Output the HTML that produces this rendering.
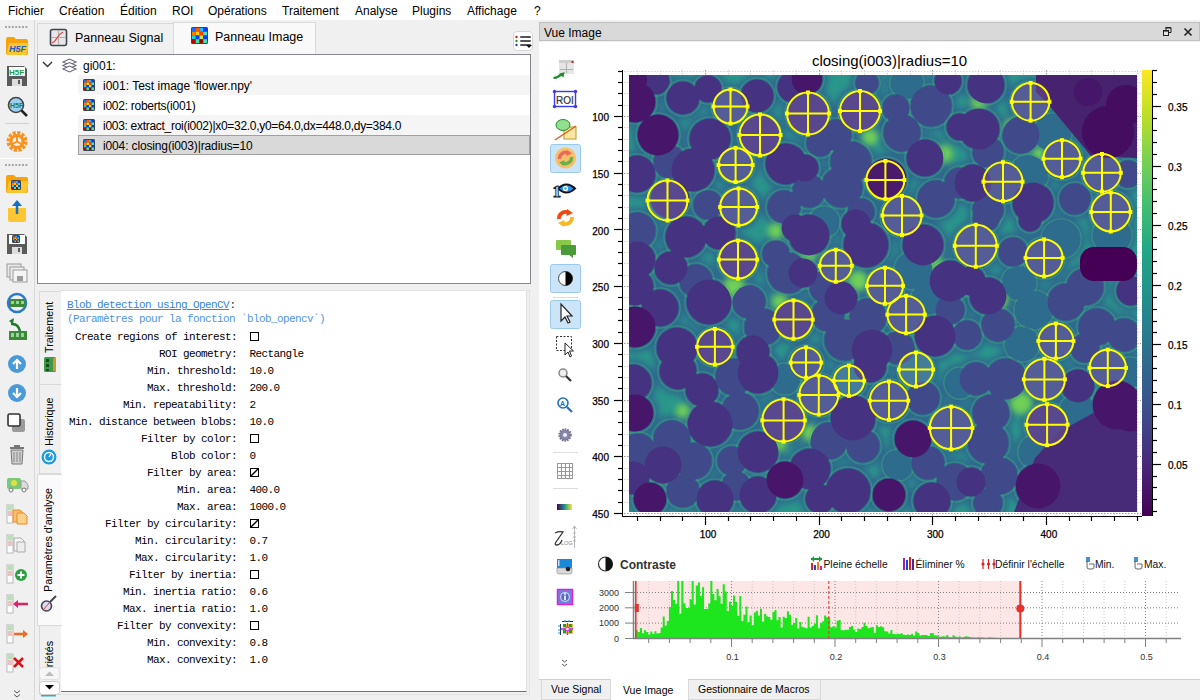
<!DOCTYPE html><html><head><meta charset="utf-8"><style>
*{margin:0;padding:0;box-sizing:border-box}
body{width:1200px;height:700px;overflow:hidden;background:#f0f0f0;position:relative;font-family:"Liberation Sans",sans-serif;color:#000}
.abs{position:absolute}
.t{position:absolute;white-space:nowrap;line-height:1}
.mono{font-family:"Liberation Mono",monospace;font-size:11px;letter-spacing:-0.6px}
.vt{position:absolute;white-space:nowrap;line-height:1;font-size:10.8px;transform-origin:0 0;transform:rotate(-90deg)}
</style></head><body>
<div class="abs" style="left:0;top:0;width:1200px;height:20px;background:#fff"></div>
<div class="t" style="left:8px;top:5px;font-size:12px">Fichier</div>
<div class="t" style="left:59px;top:5px;font-size:12px">Création</div>
<div class="t" style="left:120px;top:5px;font-size:12px">Édition</div>
<div class="t" style="left:172px;top:5px;font-size:12px">ROI</div>
<div class="t" style="left:208px;top:5px;font-size:12px">Opérations</div>
<div class="t" style="left:282px;top:5px;font-size:12px">Traitement</div>
<div class="t" style="left:355px;top:5px;font-size:12px">Analyse</div>
<div class="t" style="left:412px;top:5px;font-size:12px">Plugins</div>
<div class="t" style="left:467px;top:5px;font-size:12px">Affichage</div>
<div class="t" style="left:534px;top:5px;font-size:12px">?</div>
<div class="abs" style="left:34px;top:20px;width:1px;height:680px;background:#d8d8d8"></div>
<div class="abs" style="left:0;top:158px;width:34px;height:1px;background:#fff"></div>
<svg class="abs" style="left:0;top:0" width="1200" height="700"><rect x="5.0" y="26" width="2" height="2" fill="#a8a8a8"/><rect x="8.4" y="26" width="2" height="2" fill="#a8a8a8"/><rect x="11.8" y="26" width="2" height="2" fill="#a8a8a8"/><rect x="15.2" y="26" width="2" height="2" fill="#a8a8a8"/><rect x="18.6" y="26" width="2" height="2" fill="#a8a8a8"/><rect x="22.0" y="26" width="2" height="2" fill="#a8a8a8"/><rect x="25.4" y="26" width="2" height="2" fill="#a8a8a8"/><rect x="5.0" y="164" width="2" height="2" fill="#a8a8a8"/><rect x="8.4" y="164" width="2" height="2" fill="#a8a8a8"/><rect x="11.8" y="164" width="2" height="2" fill="#a8a8a8"/><rect x="15.2" y="164" width="2" height="2" fill="#a8a8a8"/><rect x="18.6" y="164" width="2" height="2" fill="#a8a8a8"/><rect x="22.0" y="164" width="2" height="2" fill="#a8a8a8"/><rect x="25.4" y="164" width="2" height="2" fill="#a8a8a8"/><rect x="5" y="123" width="24" height="1" fill="#d0d0d0"/><path d="M6,39 q0,-2 2,-2 h6 l2,2 h10 q2,0 2,2 v12 q0,2 -2,2 h-18 q-2,0 -2,-2z" fill="#f7a20a"/><path d="M9,43 h18 q2,0 1.5,2 l-1.5,8 q-0.5,2 -2.5,2 h-16 q-2,0 -1.5,-2 z" fill="#fcc632"/><text x="9" y="52" font-size="9" font-weight="bold" font-style="italic" fill="#1d5fd0" font-family="Liberation Sans">H5F</text><path d="M7,66 h17 l3,3 v17 h-20z" fill="#5a5a5a"/><rect x="9" y="67" width="16" height="9" fill="#fff"/><rect x="12" y="79" width="10" height="7" fill="#ddd"/><rect x="18" y="80" width="2" height="4" fill="#5a5a5a"/><text x="9" y="75" font-size="8" font-weight="bold" fill="#1aa040" font-family="Liberation Sans">H5F</text><circle cx="16" cy="105" r="7.5" fill="#9cd0f0" stroke="#444" stroke-width="1.6"/><path d="M21.5,110.5 L27,116" stroke="#222" stroke-width="2.5"/><text x="10" y="108" font-size="7" font-weight="bold" fill="#1a8040" font-family="Liberation Sans">H5F</text><circle cx="17" cy="141.5" r="8.5" fill="none" stroke="#f7931e" stroke-width="4" stroke-dasharray="3 1.45"/><circle cx="17" cy="141.5" r="6" fill="none" stroke="#f7931e" stroke-width="3"/><path d="M17,141.5 L17,136 M17,141.5 L12.5,144 M17,141.5 L21.5,144" stroke="#f7931e" stroke-width="2"/><path d="M6,177 q0,-2 2,-2 h6 l2,2 h10 q2,0 2,2 v12 q0,2 -2,2 h-18 q-2,0 -2,-2z" fill="#f7a20a"/><path d="M9,181 h18 q2,0 1.5,2 l-1.5,8 q-0.5,2 -2.5,2 h-16 q-2,0 -1.5,-2 z" fill="#fcc632"/><rect x="11" y="180" width="10" height="10" rx="1.5" fill="#3a4550"/><rect x="12.00" y="181.00" width="2.00" height="2.00" fill="#1f6fff"/><rect x="14.00" y="181.00" width="2.00" height="2.00" fill="#ff5a00"/><rect x="16.00" y="181.00" width="2.00" height="2.00" fill="#1fb7ff"/><rect x="18.00" y="181.00" width="2.00" height="2.00" fill="#0a3cff"/><rect x="12.00" y="183.00" width="2.00" height="2.00" fill="#ff7a00"/><rect x="14.00" y="183.00" width="2.00" height="2.00" fill="#ffcc00"/><rect x="16.00" y="183.00" width="2.00" height="2.00" fill="#ff3a00"/><rect x="18.00" y="183.00" width="2.00" height="2.00" fill="#3ce6c8"/><rect x="12.00" y="185.00" width="2.00" height="2.00" fill="#18d6d6"/><rect x="14.00" y="185.00" width="2.00" height="2.00" fill="#0a3cff"/><rect x="16.00" y="185.00" width="2.00" height="2.00" fill="#c8e632"/><rect x="18.00" y="185.00" width="2.00" height="2.00" fill="#0a3cff"/><rect x="12.00" y="187.00" width="2.00" height="2.00" fill="#c80000"/><rect x="14.00" y="187.00" width="2.00" height="2.00" fill="#3ce6a0"/><rect x="16.00" y="187.00" width="2.00" height="2.00" fill="#a00000"/><rect x="18.00" y="187.00" width="2.00" height="2.00" fill="#3ce6b4"/><path d="M8,208 h18 v12 q0,2 -2,2 h-14 q-2,0 -2,-2z" fill="#fcc632"/><path d="M17,202 v12" stroke="#1570c8" stroke-width="2.5"/><path d="M12,206 l5,-6 l5,6z" fill="#1570c8"/><path d="M7,234 h17 l3,3 v17 h-20z" fill="#5a5a5a"/><rect x="9" y="235" width="16" height="9" fill="#fff"/><rect x="12" y="247" width="10" height="7" fill="#ddd"/><rect x="18" y="248" width="2" height="4" fill="#5a5a5a"/><rect x="12" y="235" width="8" height="8" rx="1.5" fill="#3a4550"/><rect x="13.00" y="236.00" width="1.50" height="1.50" fill="#1f6fff"/><rect x="14.50" y="236.00" width="1.50" height="1.50" fill="#ff5a00"/><rect x="16.00" y="236.00" width="1.50" height="1.50" fill="#1fb7ff"/><rect x="17.50" y="236.00" width="1.50" height="1.50" fill="#0a3cff"/><rect x="13.00" y="237.50" width="1.50" height="1.50" fill="#ff7a00"/><rect x="14.50" y="237.50" width="1.50" height="1.50" fill="#ffcc00"/><rect x="16.00" y="237.50" width="1.50" height="1.50" fill="#ff3a00"/><rect x="17.50" y="237.50" width="1.50" height="1.50" fill="#3ce6c8"/><rect x="13.00" y="239.00" width="1.50" height="1.50" fill="#18d6d6"/><rect x="14.50" y="239.00" width="1.50" height="1.50" fill="#0a3cff"/><rect x="16.00" y="239.00" width="1.50" height="1.50" fill="#c8e632"/><rect x="17.50" y="239.00" width="1.50" height="1.50" fill="#0a3cff"/><rect x="13.00" y="240.50" width="1.50" height="1.50" fill="#c80000"/><rect x="14.50" y="240.50" width="1.50" height="1.50" fill="#3ce6a0"/><rect x="16.00" y="240.50" width="1.50" height="1.50" fill="#a00000"/><rect x="17.50" y="240.50" width="1.50" height="1.50" fill="#3ce6b4"/><rect x="7" y="264" width="14" height="13" fill="#e8e8e8" stroke="#9a9a9a"/><rect x="10" y="267" width="14" height="13" fill="#eee" stroke="#9a9a9a"/><rect x="13" y="270" width="14" height="12" fill="#f4f4f4" stroke="#9a9a9a"/><rect x="17" y="276" width="6" height="5" fill="#9a9a9a"/><circle cx="17" cy="303" r="9" fill="none" stroke="#2a78d0" stroke-width="2.5"/><rect x="9" y="299" width="16" height="8" fill="#3a8a3a"/><rect x="11" y="301" width="3" height="3" fill="#9ad09a"/><rect x="16" y="301" width="3" height="3" fill="#9ad09a"/><rect x="21" y="301" width="3" height="3" fill="#9ad09a"/><rect x="9" y="331" width="18" height="9" fill="#3a8a3a"/><rect x="11" y="333" width="3" height="4" fill="#9ad09a"/><rect x="16" y="333" width="3" height="4" fill="#9ad09a"/><rect x="21" y="333" width="3" height="4" fill="#9ad09a"/><path d="M20,331 q-2,-8 -9,-7" stroke="#1a7a2a" stroke-width="2.5" fill="none"/><path d="M9,321 l5,-3 l-1,6z" fill="#1a7a2a"/><circle cx="17" cy="364" r="9" fill="#4a9ad8"/><path d="M17,369 v-9 M13,364 l4,-4 l4,4" stroke="#fff" stroke-width="2.2" fill="none"/><circle cx="17" cy="393" r="9" fill="#4a9ad8"/><path d="M17,388 v9 M13,393 l4,4 l4,-4" stroke="#fff" stroke-width="2.2" fill="none"/><rect x="12" y="419" width="13" height="13" rx="2" fill="#9a9a9a"/><rect x="8" y="414" width="12" height="12" rx="1.5" fill="#fff" stroke="#333" stroke-width="1.6"/><rect x="10" y="447" width="14" height="2" fill="#777"/><rect x="14" y="445" width="6" height="2" fill="#777"/><path d="M11,450 h12 l-1,14 h-10z" fill="#cfcfcf" stroke="#777"/><path d="M14,452 v10 M17,452 v10 M20,452 v10" stroke="#888"/><rect x="7" y="478" width="14" height="11" rx="2" fill="#7ac87a"/><circle cx="14" cy="483" r="3" fill="#e0e040"/><path d="M21,481 h4 l3,4 v4 h-7z" fill="#ddd" stroke="#999"/><circle cx="11" cy="490" r="2" fill="#fff" stroke="#777"/><circle cx="24" cy="490" r="2" fill="#fff" stroke="#777"/><rect x="7" y="505" width="6" height="18" fill="#fff" stroke="#aaa" stroke-width="0.8"/><rect x="7.5" y="505.5" width="5" height="5" fill="#b8e0b8"/><rect x="7.5" y="511" width="5" height="5" fill="#f0c0c0"/><path d="M13,510 h7 l3,3 v9 h-10z" fill="#f8c070" stroke="#f08a20"/><path d="M17,513 h7 l3,3 v8 h-10z" fill="#fbd08a" stroke="#f08a20"/><rect x="7" y="535" width="6" height="18" fill="#fff" stroke="#aaa" stroke-width="0.8"/><rect x="7.5" y="535.5" width="5" height="5" fill="#b8e0b8"/><rect x="7.5" y="541" width="5" height="5" fill="#f0c0c0"/><path d="M14,538 h7 l3,3 v10 h-10z" fill="#f4f4f4" stroke="#aaa"/><path d="M17,542 h8 v10 h-8z" fill="#eee" stroke="#aaa"/><rect x="7" y="565" width="6" height="18" fill="#fff" stroke="#aaa" stroke-width="0.8"/><rect x="7.5" y="565.5" width="5" height="5" fill="#b8e0b8"/><rect x="7.5" y="571" width="5" height="5" fill="#f0c0c0"/><circle cx="21" cy="575" r="6" fill="#2aa040"/><path d="M21,571.5 v7 M17.5,575 h7" stroke="#fff" stroke-width="2"/><rect x="7" y="595" width="6" height="18" fill="#fff" stroke="#aaa" stroke-width="0.8"/><rect x="7.5" y="595.5" width="5" height="5" fill="#b8e0b8"/><rect x="7.5" y="601" width="5" height="5" fill="#f0c0c0"/><path d="M28,604 h-12" stroke="#e0206a" stroke-width="2.5"/><path d="M13,604 l5,-4 v8z" fill="#e0206a"/><rect x="7" y="625" width="6" height="18" fill="#fff" stroke="#aaa" stroke-width="0.8"/><rect x="7.5" y="625.5" width="5" height="5" fill="#b8e0b8"/><rect x="7.5" y="631" width="5" height="5" fill="#f0c0c0"/><path d="M14,634 h10" stroke="#f06a20" stroke-width="2.5"/><path d="M28,634 l-5,-4 v8z" fill="#f06a20"/><rect x="7" y="654" width="6" height="18" fill="#fff" stroke="#aaa" stroke-width="0.8"/><rect x="7.5" y="654.5" width="5" height="5" fill="#b8e0b8"/><rect x="7.5" y="660" width="5" height="5" fill="#f0c0c0"/><path d="M14,658 l9,9 M23,658 l-9,9" stroke="#e01010" stroke-width="2.5"/><path d="M14,690.5 l3,2.5 l3,-2.5 M14,694.5 l3,2.5 l3,-2.5" stroke="#555" stroke-width="1" fill="none"/></svg>
<div class="abs" style="left:37px;top:23px;width:137px;height:32px;background:#f0f0f0;border:1px solid #d9d9d9;border-bottom:none"></div>
<div class="abs" style="left:173px;top:22px;width:143px;height:33px;background:#f9f9f9;border:1px solid #d9d9d9;border-bottom:none"></div>
<div class="t" style="left:75px;top:32px;font-size:12.5px">Panneau Signal</div>
<div class="t" style="left:215px;top:31px;font-size:12.5px">Panneau Image</div>
<svg class="abs" style="left:0;top:0" width="1200" height="700"><rect x="50.5" y="29.5" width="16" height="16" rx="2" fill="#e8e8e8" stroke="#3a4550" stroke-width="1.6"/><path d="M58.5,30 v15 M51,37.5 h15" stroke="#b0b0b0" stroke-width="1.2"/><path d="M52,43 q3,-1 5,-5 t6,-6" stroke="#f04040" stroke-width="1.3" fill="none"/><rect x="191" y="27" width="17" height="17" rx="1.5" fill="#3a4550"/><rect x="192.00" y="28.00" width="3.75" height="3.75" fill="#1f6fff"/><rect x="195.75" y="28.00" width="3.75" height="3.75" fill="#ff5a00"/><rect x="199.50" y="28.00" width="3.75" height="3.75" fill="#1fb7ff"/><rect x="203.25" y="28.00" width="3.75" height="3.75" fill="#0a3cff"/><rect x="192.00" y="31.75" width="3.75" height="3.75" fill="#ff7a00"/><rect x="195.75" y="31.75" width="3.75" height="3.75" fill="#ffcc00"/><rect x="199.50" y="31.75" width="3.75" height="3.75" fill="#ff3a00"/><rect x="203.25" y="31.75" width="3.75" height="3.75" fill="#3ce6c8"/><rect x="192.00" y="35.50" width="3.75" height="3.75" fill="#18d6d6"/><rect x="195.75" y="35.50" width="3.75" height="3.75" fill="#0a3cff"/><rect x="199.50" y="35.50" width="3.75" height="3.75" fill="#c8e632"/><rect x="203.25" y="35.50" width="3.75" height="3.75" fill="#0a3cff"/><rect x="192.00" y="39.25" width="3.75" height="3.75" fill="#c80000"/><rect x="195.75" y="39.25" width="3.75" height="3.75" fill="#3ce6a0"/><rect x="199.50" y="39.25" width="3.75" height="3.75" fill="#a00000"/><rect x="203.25" y="39.25" width="3.75" height="3.75" fill="#3ce6b4"/></svg>
<div class="abs" style="left:513px;top:31px;width:20px;height:20px;background:#fff;border:1px solid #d6d6d6;border-radius:4px"></div>
<svg class="abs" style="left:0;top:0" width="1200" height="700"><circle cx="516.5" cy="37" r="1.2" fill="#c02020"/><rect x="520" y="36" width="11" height="2" rx="1" fill="#555"/><circle cx="516.5" cy="41" r="1.2" fill="#20a020"/><rect x="520" y="40" width="11" height="2" rx="1" fill="#555"/><circle cx="516.5" cy="45" r="1.2" fill="#2040d0"/><rect x="520" y="44" width="11" height="2" rx="1" fill="#555"/><path d="M526,45 h6 l-3,3z" fill="#111"/></svg>
<div class="abs" style="left:37px;top:54px;width:494px;height:230px;background:#fff;border:1px solid #828790"></div>
<div class="t" style="left:83px;top:60px;font-size:12px">gi001:</div>
<div class="abs" style="left:78px;top:75px;width:452px;height:20px;background:#f5f5f5;"></div>
<div class="t" style="left:103px;top:80px;font-size:12px;letter-spacing:0px">i001: Test image 'flower.npy'</div>
<div class="abs" style="left:78px;top:95px;width:452px;height:20px;background:#fff;"></div>
<div class="t" style="left:103px;top:100px;font-size:12px;letter-spacing:-0.26px">i002: roberts(i001)</div>
<div class="abs" style="left:78px;top:115px;width:452px;height:20px;background:#f5f5f5;"></div>
<div class="t" style="left:103px;top:120px;font-size:12px;letter-spacing:-0.29px">i003: extract_roi(i002)|x0=32.0,y0=64.0,dx=448.0,dy=384.0</div>
<div class="abs" style="left:78px;top:135px;width:452px;height:20px;background:#d9d9d9;border:1px solid #a0a0a0;"></div>
<div class="t" style="left:103px;top:140px;font-size:12px;letter-spacing:-0.14px">i004: closing(i003)|radius=10</div>
<svg class="abs" style="left:0;top:0" width="1200" height="700"><path d="M43,62 l4.5,4.5 l4.5,-4.5" stroke="#333" stroke-width="1.4" fill="none"/><path d="M63,62.0 l6.5,-3 l6.5,3 l-6.5,3z" fill="#fff" stroke="#667" stroke-width="1.1"/><path d="M63,65.5 l6.5,-3 l6.5,3 l-6.5,3z" fill="#fff" stroke="#667" stroke-width="1.1"/><path d="M63,69.0 l6.5,-3 l6.5,3 l-6.5,3z" fill="#fff" stroke="#667" stroke-width="1.1"/><rect x="83" y="79" width="12" height="12" rx="1.5" fill="#3a4550"/><rect x="84.00" y="80.00" width="2.50" height="2.50" fill="#1f6fff"/><rect x="86.50" y="80.00" width="2.50" height="2.50" fill="#ff5a00"/><rect x="89.00" y="80.00" width="2.50" height="2.50" fill="#1fb7ff"/><rect x="91.50" y="80.00" width="2.50" height="2.50" fill="#0a3cff"/><rect x="84.00" y="82.50" width="2.50" height="2.50" fill="#ff7a00"/><rect x="86.50" y="82.50" width="2.50" height="2.50" fill="#ffcc00"/><rect x="89.00" y="82.50" width="2.50" height="2.50" fill="#ff3a00"/><rect x="91.50" y="82.50" width="2.50" height="2.50" fill="#3ce6c8"/><rect x="84.00" y="85.00" width="2.50" height="2.50" fill="#18d6d6"/><rect x="86.50" y="85.00" width="2.50" height="2.50" fill="#0a3cff"/><rect x="89.00" y="85.00" width="2.50" height="2.50" fill="#c8e632"/><rect x="91.50" y="85.00" width="2.50" height="2.50" fill="#0a3cff"/><rect x="84.00" y="87.50" width="2.50" height="2.50" fill="#c80000"/><rect x="86.50" y="87.50" width="2.50" height="2.50" fill="#3ce6a0"/><rect x="89.00" y="87.50" width="2.50" height="2.50" fill="#a00000"/><rect x="91.50" y="87.50" width="2.50" height="2.50" fill="#3ce6b4"/><rect x="83" y="99" width="12" height="12" rx="1.5" fill="#3a4550"/><rect x="84.00" y="100.00" width="2.50" height="2.50" fill="#1f6fff"/><rect x="86.50" y="100.00" width="2.50" height="2.50" fill="#ff5a00"/><rect x="89.00" y="100.00" width="2.50" height="2.50" fill="#1fb7ff"/><rect x="91.50" y="100.00" width="2.50" height="2.50" fill="#0a3cff"/><rect x="84.00" y="102.50" width="2.50" height="2.50" fill="#ff7a00"/><rect x="86.50" y="102.50" width="2.50" height="2.50" fill="#ffcc00"/><rect x="89.00" y="102.50" width="2.50" height="2.50" fill="#ff3a00"/><rect x="91.50" y="102.50" width="2.50" height="2.50" fill="#3ce6c8"/><rect x="84.00" y="105.00" width="2.50" height="2.50" fill="#18d6d6"/><rect x="86.50" y="105.00" width="2.50" height="2.50" fill="#0a3cff"/><rect x="89.00" y="105.00" width="2.50" height="2.50" fill="#c8e632"/><rect x="91.50" y="105.00" width="2.50" height="2.50" fill="#0a3cff"/><rect x="84.00" y="107.50" width="2.50" height="2.50" fill="#c80000"/><rect x="86.50" y="107.50" width="2.50" height="2.50" fill="#3ce6a0"/><rect x="89.00" y="107.50" width="2.50" height="2.50" fill="#a00000"/><rect x="91.50" y="107.50" width="2.50" height="2.50" fill="#3ce6b4"/><rect x="83" y="119" width="12" height="12" rx="1.5" fill="#3a4550"/><rect x="84.00" y="120.00" width="2.50" height="2.50" fill="#1f6fff"/><rect x="86.50" y="120.00" width="2.50" height="2.50" fill="#ff5a00"/><rect x="89.00" y="120.00" width="2.50" height="2.50" fill="#1fb7ff"/><rect x="91.50" y="120.00" width="2.50" height="2.50" fill="#0a3cff"/><rect x="84.00" y="122.50" width="2.50" height="2.50" fill="#ff7a00"/><rect x="86.50" y="122.50" width="2.50" height="2.50" fill="#ffcc00"/><rect x="89.00" y="122.50" width="2.50" height="2.50" fill="#ff3a00"/><rect x="91.50" y="122.50" width="2.50" height="2.50" fill="#3ce6c8"/><rect x="84.00" y="125.00" width="2.50" height="2.50" fill="#18d6d6"/><rect x="86.50" y="125.00" width="2.50" height="2.50" fill="#0a3cff"/><rect x="89.00" y="125.00" width="2.50" height="2.50" fill="#c8e632"/><rect x="91.50" y="125.00" width="2.50" height="2.50" fill="#0a3cff"/><rect x="84.00" y="127.50" width="2.50" height="2.50" fill="#c80000"/><rect x="86.50" y="127.50" width="2.50" height="2.50" fill="#3ce6a0"/><rect x="89.00" y="127.50" width="2.50" height="2.50" fill="#a00000"/><rect x="91.50" y="127.50" width="2.50" height="2.50" fill="#3ce6b4"/><rect x="83" y="139" width="12" height="12" rx="1.5" fill="#3a4550"/><rect x="84.00" y="140.00" width="2.50" height="2.50" fill="#1f6fff"/><rect x="86.50" y="140.00" width="2.50" height="2.50" fill="#ff5a00"/><rect x="89.00" y="140.00" width="2.50" height="2.50" fill="#1fb7ff"/><rect x="91.50" y="140.00" width="2.50" height="2.50" fill="#0a3cff"/><rect x="84.00" y="142.50" width="2.50" height="2.50" fill="#ff7a00"/><rect x="86.50" y="142.50" width="2.50" height="2.50" fill="#ffcc00"/><rect x="89.00" y="142.50" width="2.50" height="2.50" fill="#ff3a00"/><rect x="91.50" y="142.50" width="2.50" height="2.50" fill="#3ce6c8"/><rect x="84.00" y="145.00" width="2.50" height="2.50" fill="#18d6d6"/><rect x="86.50" y="145.00" width="2.50" height="2.50" fill="#0a3cff"/><rect x="89.00" y="145.00" width="2.50" height="2.50" fill="#c8e632"/><rect x="91.50" y="145.00" width="2.50" height="2.50" fill="#0a3cff"/><rect x="84.00" y="147.50" width="2.50" height="2.50" fill="#c80000"/><rect x="86.50" y="147.50" width="2.50" height="2.50" fill="#3ce6a0"/><rect x="89.00" y="147.50" width="2.50" height="2.50" fill="#a00000"/><rect x="91.50" y="147.50" width="2.50" height="2.50" fill="#3ce6b4"/></svg>
<div class="abs" style="left:60px;top:290px;width:470px;height:405px;border:1px solid #e3e3e3"></div>
<div class="abs" style="left:61px;top:291px;width:466px;height:401px;background:#fff;border-right:1px solid #e0e0e0;border-bottom:1px solid #6f7378"></div>
<div class="abs" style="left:39px;top:291px;width:22px;height:94px;background:#f0f0f0;border:1px solid #d9d9d9;border-right:none"></div>
<div class="abs" style="left:39px;top:384px;width:22px;height:90px;background:#f0f0f0;border:1px solid #d9d9d9;border-right:none"></div>
<div class="abs" style="left:37px;top:474px;width:25px;height:152px;background:#fafafa;border:1px solid #d9d9d9;border-right:none"></div>
<div class="abs" style="left:39px;top:625px;width:22px;height:70px;background:#f0f0f0;border:1px solid #d9d9d9;border-right:none"></div>
<div class="vt" style="left:44px;top:353px">Traitement</div>
<div class="vt" style="left:44px;top:446px">Historique</div>
<div class="vt" style="left:43px;top:592px">Paramètres d'analyse</div>
<div class="abs" style="left:40px;top:627px;width:20px;height:40px;overflow:hidden"><div class="vt" style="left:4px;top:63px">Propriétés</div></div>
<svg class="abs" style="left:0;top:0" width="1200" height="700"><rect x="44" y="357" width="12" height="15" rx="1.5" fill="#3a9a4a"/><rect x="46" y="359" width="3" height="3" fill="#1a4a1a"/><rect x="46" y="364" width="3" height="3" fill="#1a4a1a"/><rect x="46" y="369" width="3" height="2" fill="#1a4a1a"/><rect x="53" y="358" width="3" height="13" fill="#c89a30"/><circle cx="49" cy="457" r="7.5" fill="#1a9ae0"/><circle cx="49" cy="457" r="4.5" fill="none" stroke="#fff" stroke-width="1.5"/><path d="M49,457 l2,-3" stroke="#fff" stroke-width="1.3"/><circle cx="46.5" cy="606" r="5" fill="#dde" stroke="#445" stroke-width="1.6"/><path d="M50,602 l6,-6" stroke="#445" stroke-width="2"/><path d="M43,610 l7,-8" stroke="#e04040" stroke-width="1"/><rect x="39.5" y="667.5" width="20" height="12" rx="3" fill="#f6f6f6" stroke="#e0e0e0"/><path d="M45,676 l4.5,-4.5 l4.5,4.5z" fill="#bbb"/><rect x="39.5" y="681.5" width="20" height="13" rx="3" fill="#fff" stroke="#ccc"/><path d="M45,685 l4.5,4.5 l4.5,-4.5z" fill="#000"/><rect x="41" y="695" width="15" height="1.5" fill="#30b0c0"/></svg>
<div class="t mono" style="left:67px;top:300px;color:#3a84de;text-decoration:underline">Blob detection using OpenCV</div>
<div class="t mono" style="left:229.5px;top:300px;color:#222">:</div>
<div class="t mono" style="left:67px;top:314px;color:#4f95e6">(Paramètres pour la fonction `blob_opencv`)</div>
<div class="t mono" style="right:963px;top:332px;text-align:right">Create regions of interest:</div>
<div class="t mono" style="right:963px;top:349px;text-align:right">ROI geometry:</div>
<div class="t mono" style="left:249.5px;top:349px">Rectangle</div>
<div class="t mono" style="right:963px;top:366px;text-align:right">Min. threshold:</div>
<div class="t mono" style="left:249.5px;top:366px">10.0</div>
<div class="t mono" style="right:963px;top:383px;text-align:right">Max. threshold:</div>
<div class="t mono" style="left:249.5px;top:383px">200.0</div>
<div class="t mono" style="right:963px;top:400px;text-align:right">Min. repeatability:</div>
<div class="t mono" style="left:249.5px;top:400px">2</div>
<div class="t mono" style="right:963px;top:417px;text-align:right">Min. distance between blobs:</div>
<div class="t mono" style="left:249.5px;top:417px">10.0</div>
<div class="t mono" style="right:963px;top:434px;text-align:right">Filter by color:</div>
<div class="t mono" style="right:963px;top:451px;text-align:right">Blob color:</div>
<div class="t mono" style="left:249.5px;top:451px">0</div>
<div class="t mono" style="right:963px;top:468px;text-align:right">Filter by area:</div>
<div class="t mono" style="right:963px;top:485px;text-align:right">Min. area:</div>
<div class="t mono" style="left:249.5px;top:485px">400.0</div>
<div class="t mono" style="right:963px;top:502px;text-align:right">Max. area:</div>
<div class="t mono" style="left:249.5px;top:502px">1000.0</div>
<div class="t mono" style="right:963px;top:519px;text-align:right">Filter by circularity:</div>
<div class="t mono" style="right:963px;top:536px;text-align:right">Min. circularity:</div>
<div class="t mono" style="left:249.5px;top:536px">0.7</div>
<div class="t mono" style="right:963px;top:553px;text-align:right">Max. circularity:</div>
<div class="t mono" style="left:249.5px;top:553px">1.0</div>
<div class="t mono" style="right:963px;top:570px;text-align:right">Filter by inertia:</div>
<div class="t mono" style="right:963px;top:587px;text-align:right">Min. inertia ratio:</div>
<div class="t mono" style="left:249.5px;top:587px">0.6</div>
<div class="t mono" style="right:963px;top:604px;text-align:right">Max. inertia ratio:</div>
<div class="t mono" style="left:249.5px;top:604px">1.0</div>
<div class="t mono" style="right:963px;top:621px;text-align:right">Filter by convexity:</div>
<div class="t mono" style="right:963px;top:638px;text-align:right">Min. convexity:</div>
<div class="t mono" style="left:249.5px;top:638px">0.8</div>
<div class="t mono" style="right:963px;top:655px;text-align:right">Max. convexity:</div>
<div class="t mono" style="left:249.5px;top:655px">1.0</div>
<svg class="abs" style="left:0;top:0" width="1200" height="700"><rect x="250.5" y="332.5" width="8" height="8" fill="#fff" stroke="#000" stroke-width="1"/><rect x="250.5" y="434.5" width="8" height="8" fill="#fff" stroke="#000" stroke-width="1"/><rect x="250.5" y="468.5" width="8" height="8" fill="#fff" stroke="#000" stroke-width="1"/><path d="M251,476L258,469" stroke="#000" stroke-width="1.3"/><rect x="250.5" y="519.5" width="8" height="8" fill="#fff" stroke="#000" stroke-width="1"/><path d="M251,527L258,520" stroke="#000" stroke-width="1.3"/><rect x="250.5" y="570.5" width="8" height="8" fill="#fff" stroke="#000" stroke-width="1"/><rect x="250.5" y="621.5" width="8" height="8" fill="#fff" stroke="#000" stroke-width="1"/></svg>
<div class="abs" style="left:539px;top:22px;width:661px;height:19px;background:#d9d9d9;border:1px solid #bfbfbf"></div>
<div class="t" style="left:544px;top:27px;font-size:12px">Vue Image</div>
<svg class="abs" style="left:0;top:0" width="1200" height="700"><path d="M1166,30 v-2.5 h5 v5 h-2" fill="none" stroke="#222" stroke-width="1"/><rect x="1165.5" y="27" width="5.5" height="1.5" fill="#222"/><rect x="1163.5" y="30.5" width="5" height="5" fill="#e6e6e6" stroke="#222" stroke-width="1"/><rect x="1163" y="30" width="6" height="1.6" fill="#222"/><path d="M1184.5,28.5 l7,7 M1191.5,28.5 l-7,7" stroke="#222" stroke-width="1.6"/></svg>
<div class="abs" style="left:539px;top:42px;width:661px;height:638px;background:#fff;border-bottom:1px solid #d0d0d0"></div>
<svg class="abs" style="left:0;top:0" width="1200" height="700"><rect x="559" y="60" width="15" height="14" rx="1" fill="#e6e6e6"/><rect x="559" y="60" width="15" height="3" fill="#cfcfcf"/><rect x="571.5" y="61" width="2" height="2" fill="#e02020"/><path d="M566.5,63 v10 M560,69.5 h13" stroke="#b0b0b0"/><path d="M553.5,78 q5,-0.5 8,-4" stroke="#1a8a2a" stroke-width="2.2" fill="none"/><path d="M564.5,72 l-1,5.5 l-4.5,-3.5z" fill="#1a8a2a"/><rect x="554.5" y="91.5" width="21" height="15" fill="#fff" stroke="#3a3af0" stroke-width="1.4"/><text x="556" y="103.5" font-size="10" fill="#333" stroke="#333" stroke-width="0.2" font-family="Liberation Sans">ROI</text><circle cx="554.5" cy="91.5" r="1.7" fill="#3a3af0"/><circle cx="575.5" cy="91.5" r="1.7" fill="#3a3af0"/><circle cx="554.5" cy="106.5" r="1.7" fill="#3a3af0"/><circle cx="575.5" cy="106.5" r="1.7" fill="#3a3af0"/><rect x="564" y="127" width="12" height="12" fill="#fce8a0" stroke="#b89a30"/><ellipse cx="563" cy="125" rx="7" ry="5.5" fill="#90e090" stroke="#2a8a2a"/><path d="M555,140 l21,-14" stroke="#e06020" stroke-width="1.5"/><rect x="550.5" y="144.5" width="30" height="28" rx="2" fill="#cce4f7" stroke="#99c9ef"/><circle cx="565.5" cy="158" r="10.5" fill="#f8c06a"/><path d="M559.5,159 a6,6 0 0 1 9.5,-5.5" stroke="#ec6a5a" stroke-width="3.5" fill="none"/><path d="M567,150 l5,3.5 l-5.5,2.5z" fill="#ec6a5a"/><path d="M571.5,157 a6,6 0 0 1 -9.5,5.5" stroke="#6ab04a" stroke-width="3.5" fill="none"/><path d="M564,166 l-5,-3.5 l5.5,-2.5z" fill="#6ab04a"/><path d="M557,188.5 q9,-10 19.5,0 q-10.5,10 -19.5,0z" fill="#111"/><path d="M559.5,188.5 q7,-7 14,0 q-7,7 -14,0z" fill="#2a90e8"/><circle cx="565.5" cy="188.5" r="2.6" fill="#fff"/><circle cx="565.5" cy="188.5" r="1.3" fill="#3ab0f0"/><text x="552.5" y="197" font-size="17" font-weight="bold" fill="#fff" stroke="#222" stroke-width="1" font-family="Liberation Serif">1</text><path d="M559,219 a6.5,6.5 0 0 1 10,-6" stroke="#f04a10" stroke-width="3.8" fill="none"/><path d="M567,209 l6,4 l-6.5,3z" fill="#f04a10"/><path d="M572,217 a6.5,6.5 0 0 1 -10,6" stroke="#f8b820" stroke-width="3.8" fill="none"/><path d="M564,227 l-6,-4 l6.5,-3z" fill="#f8b820"/><rect x="556" y="240" width="15" height="10" rx="1" fill="#8ac84a"/><rect x="561" y="245" width="15" height="10" rx="1" fill="#4a9a3a"/><path d="M573,255 v3 l-4,-3z" fill="#4a9a3a"/><rect x="550.5" y="264.5" width="30" height="28" rx="2" fill="#cce4f7" stroke="#99c9ef"/><circle cx="565.5" cy="278.5" r="7" fill="#fff" stroke="#444" stroke-width="1"/><path d="M565.5,271.5 a7,7 0 0 1 0,14z" fill="#000"/><rect x="553" y="297" width="25" height="1" fill="#ddd"/><rect x="550.5" y="300.5" width="30" height="28" rx="2" fill="#cce4f7" stroke="#99c9ef"/><path d="M561,304 v17 l4,-4 l3,6 l2,-1 l-3,-6 l5,0z" fill="#fff" stroke="#222" stroke-width="1.2"/><rect x="556.5" y="336.5" width="15" height="14" fill="none" stroke="#333" stroke-dasharray="2 1.5"/><path d="M565,343 v12 l3,-3 l2,5 l1.5,-1 l-2,-5 l4,0z" fill="#fff" stroke="#222"/><circle cx="563" cy="373" r="4" fill="#eee" stroke="#888" stroke-width="1.5"/><path d="M566,376 l5,5" stroke="#333" stroke-width="2.2"/><circle cx="563" cy="403" r="5" fill="#fff" stroke="#2070c0" stroke-width="1.6"/><path d="M567,407 l5,5" stroke="#2070c0" stroke-width="2.2"/><text x="560" y="406" font-size="7" font-weight="bold" fill="#2070c0" font-family="Liberation Sans">A</text><circle cx="565" cy="435" r="5.5" fill="#8a8aa8" stroke="#707090" stroke-width="2.5" stroke-dasharray="1.5 1"/><circle cx="565" cy="435" r="2" fill="#eef"/><rect x="553" y="452" width="25" height="1" fill="#ddd"/><rect x="557.5" y="463.5" width="15" height="15" fill="none" stroke="#999"/><path d="M561.5,463.5 v15 M565.5,463.5 v15 M569.5,463.5 v15 M557.5,467.5 h15 M557.5,471.5 h15 M557.5,475.5 h15" stroke="#999"/><rect x="553" y="488" width="25" height="1" fill="#ddd"/><defs><linearGradient id="vh" x1="0" x2="1"><stop offset="0" stop-color="#440154"/><stop offset="0.5" stop-color="#21918c"/><stop offset="1" stop-color="#fde725"/></linearGradient></defs><rect x="557" y="504" width="15" height="6" fill="url(#vh)"/><path d="M555,533 q4,-2 8,-1 l-7,10 q-2,3 1,3 q3,0 5,-5" stroke="#333" stroke-width="1.3" fill="none"/><text x="561" y="545" font-size="5.5" fill="#888" font-family="Liberation Sans">LOG</text><path d="M574.5,526 v22 M572.5,529 l2,-3 l2,3 M573,533 h3 M573,537 h3 M573,541 h3" stroke="#aaa" stroke-width="0.8" fill="none"/><rect x="557" y="559" width="15" height="9" fill="#1a8ad8"/><rect x="558" y="560" width="1.5" height="6" fill="#cdf"/><path d="M557,568 h15 v4 q0,2 -2,2 h-11 q-2,0 -2,-2z" fill="#d8d8d8" stroke="#888" stroke-width="0.6"/><circle cx="568" cy="569" r="2.3" fill="#222"/><rect x="557.5" y="589.5" width="15" height="15" fill="#7080d8" stroke="#e020e0" stroke-width="1.5"/><circle cx="565" cy="597" r="5" fill="#c8d0f0"/><circle cx="565" cy="597" r="3.8" fill="#5a6ac8"/><rect x="564.2" y="595.5" width="1.6" height="4.5" fill="#fff"/><circle cx="565" cy="594" r="0.9" fill="#fff"/><rect x="563" y="624" width="10" height="10" fill="#f0c040"/><rect x="563" y="624" width="3" height="3" fill="#2a9a2a"/><rect x="569" y="624" width="3" height="3" fill="#2a9a2a"/><rect x="566" y="627" width="3" height="3" fill="#2a9a2a"/><rect x="563" y="630" width="3" height="3" fill="#2a9a2a"/><rect x="569" y="630" width="3" height="3" fill="#2a9a2a"/><path d="M560.5,624 v11 M562,621.5 h11" stroke="#1a3a6a" stroke-width="1"/><path d="M558,626 h2 M558,630 h2 M558,633 h2 M565,620 v2 M569,620 v2" stroke="#1a9ae0" stroke-width="1.2"/><path d="M567.5,623 v12 M561,629 h12" stroke="#d020e0" stroke-width="1.3"/><circle cx="567.5" cy="629" r="1.8" fill="#fff" stroke="#d020e0" stroke-width="1"/><path d="M562,660 l2.5,2 l2.5,-2 M562,664 l2.5,2 l2.5,-2" stroke="#555" stroke-width="1" fill="none"/></svg>
<svg class="abs" style="left:0;top:0" width="1200" height="700">
<text x="889.5" y="66" font-size="15" text-anchor="middle" font-family="Liberation Sans">closing(i003)|radius=10</text>
<path d="M624,71.5H1141" stroke="#d4d4d4" stroke-width="1" stroke-dasharray="1.5 1.5"/>
<path d="M624,82.5H1141" stroke="#d4d4d4" stroke-width="1" stroke-dasharray="1.5 1.5"/>
<path d="M624,93.5H1141" stroke="#d4d4d4" stroke-width="1" stroke-dasharray="1.5 1.5"/>
<path d="M624,105.5H1141" stroke="#d4d4d4" stroke-width="1" stroke-dasharray="1.5 1.5"/>
<path d="M624,116.5H1141" stroke="#9a9a9a" stroke-width="1" stroke-dasharray="1.5 1.5"/>
<path d="M624,127.5H1141" stroke="#d4d4d4" stroke-width="1" stroke-dasharray="1.5 1.5"/>
<path d="M624,139.5H1141" stroke="#d4d4d4" stroke-width="1" stroke-dasharray="1.5 1.5"/>
<path d="M624,150.5H1141" stroke="#d4d4d4" stroke-width="1" stroke-dasharray="1.5 1.5"/>
<path d="M624,161.5H1141" stroke="#d4d4d4" stroke-width="1" stroke-dasharray="1.5 1.5"/>
<path d="M624,173.5H1141" stroke="#9a9a9a" stroke-width="1" stroke-dasharray="1.5 1.5"/>
<path d="M624,184.5H1141" stroke="#d4d4d4" stroke-width="1" stroke-dasharray="1.5 1.5"/>
<path d="M624,195.5H1141" stroke="#d4d4d4" stroke-width="1" stroke-dasharray="1.5 1.5"/>
<path d="M624,207.5H1141" stroke="#d4d4d4" stroke-width="1" stroke-dasharray="1.5 1.5"/>
<path d="M624,218.5H1141" stroke="#d4d4d4" stroke-width="1" stroke-dasharray="1.5 1.5"/>
<path d="M624,229.5H1141" stroke="#9a9a9a" stroke-width="1" stroke-dasharray="1.5 1.5"/>
<path d="M624,241.5H1141" stroke="#d4d4d4" stroke-width="1" stroke-dasharray="1.5 1.5"/>
<path d="M624,252.5H1141" stroke="#d4d4d4" stroke-width="1" stroke-dasharray="1.5 1.5"/>
<path d="M624,263.5H1141" stroke="#d4d4d4" stroke-width="1" stroke-dasharray="1.5 1.5"/>
<path d="M624,275.5H1141" stroke="#d4d4d4" stroke-width="1" stroke-dasharray="1.5 1.5"/>
<path d="M624,286.5H1141" stroke="#9a9a9a" stroke-width="1" stroke-dasharray="1.5 1.5"/>
<path d="M624,297.5H1141" stroke="#d4d4d4" stroke-width="1" stroke-dasharray="1.5 1.5"/>
<path d="M624,309.5H1141" stroke="#d4d4d4" stroke-width="1" stroke-dasharray="1.5 1.5"/>
<path d="M624,320.5H1141" stroke="#d4d4d4" stroke-width="1" stroke-dasharray="1.5 1.5"/>
<path d="M624,332.5H1141" stroke="#d4d4d4" stroke-width="1" stroke-dasharray="1.5 1.5"/>
<path d="M624,343.5H1141" stroke="#9a9a9a" stroke-width="1" stroke-dasharray="1.5 1.5"/>
<path d="M624,354.5H1141" stroke="#d4d4d4" stroke-width="1" stroke-dasharray="1.5 1.5"/>
<path d="M624,366.5H1141" stroke="#d4d4d4" stroke-width="1" stroke-dasharray="1.5 1.5"/>
<path d="M624,377.5H1141" stroke="#d4d4d4" stroke-width="1" stroke-dasharray="1.5 1.5"/>
<path d="M624,388.5H1141" stroke="#d4d4d4" stroke-width="1" stroke-dasharray="1.5 1.5"/>
<path d="M624,400.5H1141" stroke="#9a9a9a" stroke-width="1" stroke-dasharray="1.5 1.5"/>
<path d="M624,411.5H1141" stroke="#d4d4d4" stroke-width="1" stroke-dasharray="1.5 1.5"/>
<path d="M624,422.5H1141" stroke="#d4d4d4" stroke-width="1" stroke-dasharray="1.5 1.5"/>
<path d="M624,434.5H1141" stroke="#d4d4d4" stroke-width="1" stroke-dasharray="1.5 1.5"/>
<path d="M624,445.5H1141" stroke="#d4d4d4" stroke-width="1" stroke-dasharray="1.5 1.5"/>
<path d="M624,456.5H1141" stroke="#9a9a9a" stroke-width="1" stroke-dasharray="1.5 1.5"/>
<path d="M624,468.5H1141" stroke="#d4d4d4" stroke-width="1" stroke-dasharray="1.5 1.5"/>
<path d="M624,479.5H1141" stroke="#d4d4d4" stroke-width="1" stroke-dasharray="1.5 1.5"/>
<path d="M624,490.5H1141" stroke="#d4d4d4" stroke-width="1" stroke-dasharray="1.5 1.5"/>
<path d="M624,502.5H1141" stroke="#d4d4d4" stroke-width="1" stroke-dasharray="1.5 1.5"/>
<path d="M624,513.5H1141" stroke="#9a9a9a" stroke-width="1" stroke-dasharray="1.5 1.5"/>
<path d="M637.5,70V516" stroke="#d4d4d4" stroke-width="1" stroke-dasharray="1.5 1.5"/>
<path d="M660.5,70V516" stroke="#d4d4d4" stroke-width="1" stroke-dasharray="1.5 1.5"/>
<path d="M682.5,70V516" stroke="#d4d4d4" stroke-width="1" stroke-dasharray="1.5 1.5"/>
<path d="M705.5,70V516" stroke="#9a9a9a" stroke-width="1" stroke-dasharray="1.5 1.5"/>
<path d="M728.5,70V516" stroke="#d4d4d4" stroke-width="1" stroke-dasharray="1.5 1.5"/>
<path d="M750.5,70V516" stroke="#d4d4d4" stroke-width="1" stroke-dasharray="1.5 1.5"/>
<path d="M773.5,70V516" stroke="#d4d4d4" stroke-width="1" stroke-dasharray="1.5 1.5"/>
<path d="M796.5,70V516" stroke="#d4d4d4" stroke-width="1" stroke-dasharray="1.5 1.5"/>
<path d="M819.5,70V516" stroke="#9a9a9a" stroke-width="1" stroke-dasharray="1.5 1.5"/>
<path d="M841.5,70V516" stroke="#d4d4d4" stroke-width="1" stroke-dasharray="1.5 1.5"/>
<path d="M864.5,70V516" stroke="#d4d4d4" stroke-width="1" stroke-dasharray="1.5 1.5"/>
<path d="M887.5,70V516" stroke="#d4d4d4" stroke-width="1" stroke-dasharray="1.5 1.5"/>
<path d="M910.5,70V516" stroke="#d4d4d4" stroke-width="1" stroke-dasharray="1.5 1.5"/>
<path d="M932.5,70V516" stroke="#9a9a9a" stroke-width="1" stroke-dasharray="1.5 1.5"/>
<path d="M955.5,70V516" stroke="#d4d4d4" stroke-width="1" stroke-dasharray="1.5 1.5"/>
<path d="M978.5,70V516" stroke="#d4d4d4" stroke-width="1" stroke-dasharray="1.5 1.5"/>
<path d="M1000.5,70V516" stroke="#d4d4d4" stroke-width="1" stroke-dasharray="1.5 1.5"/>
<path d="M1023.5,70V516" stroke="#d4d4d4" stroke-width="1" stroke-dasharray="1.5 1.5"/>
<path d="M1046.5,70V516" stroke="#9a9a9a" stroke-width="1" stroke-dasharray="1.5 1.5"/>
<path d="M1069.5,70V516" stroke="#d4d4d4" stroke-width="1" stroke-dasharray="1.5 1.5"/>
<path d="M1091.5,70V516" stroke="#d4d4d4" stroke-width="1" stroke-dasharray="1.5 1.5"/>
<path d="M1114.5,70V516" stroke="#d4d4d4" stroke-width="1" stroke-dasharray="1.5 1.5"/>
<path d="M1137.5,70V516" stroke="#d4d4d4" stroke-width="1" stroke-dasharray="1.5 1.5"/>
<defs><filter id="bl" x="-10%" y="-10%" width="120%" height="120%"><feGaussianBlur stdDeviation="3"/></filter><filter id="sb" x="-2%" y="-2%" width="104%" height="104%"><feGaussianBlur stdDeviation="0.7"/></filter><clipPath id="imc"><rect x="629" y="75" width="508" height="437"/></clipPath></defs>
<g clip-path="url(#imc)"><g filter="url(#sb)">
<rect x="629" y="75" width="508" height="437" fill="#2a978a"/>
<g filter="url(#bl)">
<circle cx="635.0" cy="102.0" r="26.0" fill="#2e6a8e"/>
<circle cx="656.0" cy="81.0" r="19.0" fill="#2e6a8e"/>
<circle cx="683.0" cy="98.0" r="22.0" fill="#2e6a8e"/>
<circle cx="708.0" cy="89.0" r="19.0" fill="#2e6a8e"/>
<circle cx="658.0" cy="135.0" r="26.0" fill="#2e6a8e"/>
<circle cx="710.0" cy="139.0" r="26.0" fill="#2e6a8e"/>
<circle cx="757.0" cy="96.0" r="22.0" fill="#2e6a8e"/>
<circle cx="793.0" cy="87.0" r="21.0" fill="#2e6a8e"/>
<circle cx="670.0" cy="162.0" r="22.0" fill="#2e6a8e"/>
<circle cx="693.0" cy="170.0" r="27.0" fill="#2e6a8e"/>
<circle cx="637.0" cy="174.0" r="24.0" fill="#2e6a8e"/>
<circle cx="786.0" cy="164.0" r="26.0" fill="#2e6a8e"/>
<circle cx="708.0" cy="205.0" r="20.0" fill="#2e6a8e"/>
<circle cx="670.0" cy="199.0" r="25.0" fill="#2e6a8e"/>
<circle cx="759.0" cy="135.0" r="26.0" fill="#2e6a8e"/>
<circle cx="784.0" cy="207.0" r="22.0" fill="#2e6a8e"/>
<circle cx="730.0" cy="106.0" r="23.0" fill="#2e6a8e"/>
<circle cx="736.0" cy="165.0" r="23.0" fill="#2e6a8e"/>
<circle cx="739.0" cy="206.0" r="24.0" fill="#2e6a8e"/>
<circle cx="807.0" cy="79.0" r="21.0" fill="#2e6a8e"/>
<circle cx="836.0" cy="135.0" r="21.0" fill="#2e6a8e"/>
<circle cx="820.0" cy="143.0" r="19.0" fill="#2e6a8e"/>
<circle cx="896.0" cy="108.0" r="19.0" fill="#2e6a8e"/>
<circle cx="931.0" cy="106.0" r="26.0" fill="#2e6a8e"/>
<circle cx="948.0" cy="81.0" r="19.0" fill="#2e6a8e"/>
<circle cx="902.0" cy="133.0" r="24.0" fill="#2e6a8e"/>
<circle cx="925.0" cy="158.0" r="24.0" fill="#2e6a8e"/>
<circle cx="960.0" cy="127.0" r="19.0" fill="#2e6a8e"/>
<circle cx="851.0" cy="162.0" r="26.0" fill="#2e6a8e"/>
<circle cx="842.0" cy="187.0" r="26.0" fill="#2e6a8e"/>
<circle cx="805.0" cy="168.0" r="19.0" fill="#2e6a8e"/>
<circle cx="809.0" cy="191.0" r="22.0" fill="#2e6a8e"/>
<circle cx="886.0" cy="179.0" r="26.0" fill="#2e6a8e"/>
<circle cx="936.0" cy="199.0" r="24.0" fill="#2e6a8e"/>
<circle cx="960.0" cy="183.0" r="21.0" fill="#2e6a8e"/>
<circle cx="861.0" cy="212.0" r="19.0" fill="#2e6a8e"/>
<circle cx="867.0" cy="83.0" r="17.0" fill="#2e6a8e"/>
<circle cx="907.0" cy="83.0" r="21.0" fill="#2e6a8e"/>
<circle cx="808.0" cy="113.0" r="27.0" fill="#2e6a8e"/>
<circle cx="860.0" cy="111.0" r="26.0" fill="#2e6a8e"/>
<circle cx="901.0" cy="216.0" r="25.0" fill="#2e6a8e"/>
<circle cx="986.0" cy="85.0" r="24.0" fill="#2e6a8e"/>
<circle cx="979.0" cy="129.0" r="26.0" fill="#2e6a8e"/>
<circle cx="1021.0" cy="135.0" r="24.0" fill="#2e6a8e"/>
<circle cx="1052.0" cy="133.0" r="24.0" fill="#2e6a8e"/>
<circle cx="988.0" cy="152.0" r="21.0" fill="#2e6a8e"/>
<circle cx="973.0" cy="183.0" r="24.0" fill="#2e6a8e"/>
<circle cx="1029.0" cy="174.0" r="24.0" fill="#2e6a8e"/>
<circle cx="1033.0" cy="203.0" r="26.0" fill="#2e6a8e"/>
<circle cx="988.0" cy="210.0" r="21.0" fill="#2e6a8e"/>
<circle cx="1128.0" cy="174.0" r="19.0" fill="#2e6a8e"/>
<circle cx="1075.0" cy="199.0" r="21.0" fill="#2e6a8e"/>
<circle cx="1031.0" cy="102.0" r="25.0" fill="#2e6a8e"/>
<circle cx="1062.0" cy="159.0" r="25.0" fill="#2e6a8e"/>
<circle cx="1102.0" cy="173.0" r="25.0" fill="#2e6a8e"/>
<circle cx="1003.0" cy="182.0" r="26.0" fill="#2e6a8e"/>
<circle cx="1111.0" cy="212.0" r="26.0" fill="#2e6a8e"/>
<circle cx="637.0" cy="231.0" r="24.0" fill="#2e6a8e"/>
<circle cx="686.0" cy="237.0" r="26.0" fill="#2e6a8e"/>
<circle cx="719.0" cy="233.0" r="22.0" fill="#2e6a8e"/>
<circle cx="637.0" cy="260.0" r="24.0" fill="#2e6a8e"/>
<circle cx="671.0" cy="268.0" r="22.0" fill="#2e6a8e"/>
<circle cx="696.0" cy="281.0" r="22.0" fill="#2e6a8e"/>
<circle cx="635.0" cy="287.0" r="24.0" fill="#2e6a8e"/>
<circle cx="709.0" cy="302.0" r="28.0" fill="#2e6a8e"/>
<circle cx="660.0" cy="308.0" r="24.0" fill="#2e6a8e"/>
<circle cx="635.0" cy="327.0" r="26.0" fill="#2e6a8e"/>
<circle cx="677.0" cy="348.0" r="26.0" fill="#2e6a8e"/>
<circle cx="749.0" cy="302.0" r="22.0" fill="#2e6a8e"/>
<circle cx="763.0" cy="327.0" r="24.0" fill="#2e6a8e"/>
<circle cx="753.0" cy="352.0" r="22.0" fill="#2e6a8e"/>
<circle cx="788.0" cy="273.0" r="26.0" fill="#2e6a8e"/>
<circle cx="776.0" cy="254.0" r="19.0" fill="#2e6a8e"/>
<circle cx="795.0" cy="228.0" r="19.0" fill="#2e6a8e"/>
<circle cx="738.0" cy="260.0" r="25.0" fill="#2e6a8e"/>
<circle cx="715.0" cy="347.0" r="24.0" fill="#2e6a8e"/>
<circle cx="794.0" cy="320.0" r="25.0" fill="#2e6a8e"/>
<circle cx="809.0" cy="235.0" r="26.0" fill="#2e6a8e"/>
<circle cx="866.0" cy="245.0" r="28.0" fill="#2e6a8e"/>
<circle cx="856.0" cy="224.0" r="20.0" fill="#2e6a8e"/>
<circle cx="923.0" cy="245.0" r="26.0" fill="#2e6a8e"/>
<circle cx="803.0" cy="273.0" r="20.0" fill="#2e6a8e"/>
<circle cx="826.0" cy="287.0" r="22.0" fill="#2e6a8e"/>
<circle cx="841.0" cy="298.0" r="22.0" fill="#2e6a8e"/>
<circle cx="828.0" cy="315.0" r="22.0" fill="#2e6a8e"/>
<circle cx="868.0" cy="317.0" r="24.0" fill="#2e6a8e"/>
<circle cx="845.0" cy="340.0" r="26.0" fill="#2e6a8e"/>
<circle cx="872.0" cy="350.0" r="26.0" fill="#2e6a8e"/>
<circle cx="914.0" cy="270.0" r="24.0" fill="#2e6a8e"/>
<circle cx="950.0" cy="281.0" r="26.0" fill="#2e6a8e"/>
<circle cx="929.0" cy="298.0" r="22.0" fill="#2e6a8e"/>
<circle cx="950.0" cy="310.0" r="20.0" fill="#2e6a8e"/>
<circle cx="935.0" cy="336.0" r="26.0" fill="#2e6a8e"/>
<circle cx="898.0" cy="348.0" r="22.0" fill="#2e6a8e"/>
<circle cx="967.0" cy="335.0" r="20.0" fill="#2e6a8e"/>
<circle cx="824.0" cy="222.0" r="20.0" fill="#2e6a8e"/>
<circle cx="836.0" cy="266.0" r="22.0" fill="#2e6a8e"/>
<circle cx="885.0" cy="286.0" r="24.0" fill="#2e6a8e"/>
<circle cx="906.0" cy="315.0" r="25.0" fill="#2e6a8e"/>
<circle cx="976.0" cy="246.0" r="27.0" fill="#2e6a8e"/>
<circle cx="1013.0" cy="252.0" r="20.0" fill="#2e6a8e"/>
<circle cx="1019.0" cy="283.0" r="22.0" fill="#2e6a8e"/>
<circle cx="988.0" cy="296.0" r="24.0" fill="#2e6a8e"/>
<circle cx="1034.0" cy="310.0" r="24.0" fill="#2e6a8e"/>
<circle cx="1066.0" cy="302.0" r="24.0" fill="#2e6a8e"/>
<circle cx="1085.0" cy="287.0" r="24.0" fill="#2e6a8e"/>
<circle cx="1131.0" cy="291.0" r="20.0" fill="#2e6a8e"/>
<circle cx="998.0" cy="325.0" r="22.0" fill="#2e6a8e"/>
<circle cx="1097.0" cy="327.0" r="24.0" fill="#2e6a8e"/>
<circle cx="1124.0" cy="335.0" r="22.0" fill="#2e6a8e"/>
<circle cx="1022.0" cy="344.0" r="22.0" fill="#2e6a8e"/>
<circle cx="971.0" cy="281.0" r="20.0" fill="#2e6a8e"/>
<circle cx="986.0" cy="218.0" r="19.0" fill="#2e6a8e"/>
<circle cx="1030.0" cy="220.0" r="17.0" fill="#2e6a8e"/>
<circle cx="1061.0" cy="239.0" r="24.0" fill="#2e6a8e"/>
<circle cx="1112.0" cy="235.0" r="24.0" fill="#2e6a8e"/>
<circle cx="1085.0" cy="348.0" r="20.0" fill="#2e6a8e"/>
<circle cx="1044.0" cy="258.0" r="25.0" fill="#2e6a8e"/>
<circle cx="1056.0" cy="341.0" r="24.0" fill="#2e6a8e"/>
<circle cx="1108.0" cy="368.0" r="24.0" fill="#2e6a8e"/>
<circle cx="1044.0" cy="379.0" r="26.0" fill="#2e6a8e"/>
<circle cx="633.0" cy="383.0" r="24.0" fill="#2e6a8e"/>
<circle cx="635.0" cy="413.0" r="24.0" fill="#2e6a8e"/>
<circle cx="678.0" cy="371.0" r="24.0" fill="#2e6a8e"/>
<circle cx="702.0" cy="390.0" r="22.0" fill="#2e6a8e"/>
<circle cx="734.0" cy="377.0" r="24.0" fill="#2e6a8e"/>
<circle cx="758.0" cy="373.0" r="26.0" fill="#2e6a8e"/>
<circle cx="710.0" cy="424.0" r="28.0" fill="#2e6a8e"/>
<circle cx="740.0" cy="411.0" r="24.0" fill="#2e6a8e"/>
<circle cx="672.0" cy="439.0" r="24.0" fill="#2e6a8e"/>
<circle cx="638.0" cy="452.0" r="24.0" fill="#2e6a8e"/>
<circle cx="663.0" cy="465.0" r="24.0" fill="#2e6a8e"/>
<circle cx="693.0" cy="461.0" r="24.0" fill="#2e6a8e"/>
<circle cx="633.0" cy="478.0" r="22.0" fill="#2e6a8e"/>
<circle cx="650.0" cy="499.0" r="22.0" fill="#2e6a8e"/>
<circle cx="683.0" cy="491.0" r="22.0" fill="#2e6a8e"/>
<circle cx="715.0" cy="499.0" r="24.0" fill="#2e6a8e"/>
<circle cx="732.0" cy="461.0" r="20.0" fill="#2e6a8e"/>
<circle cx="758.0" cy="452.0" r="26.0" fill="#2e6a8e"/>
<circle cx="785.0" cy="480.0" r="24.0" fill="#2e6a8e"/>
<circle cx="758.0" cy="495.0" r="24.0" fill="#2e6a8e"/>
<circle cx="736.0" cy="486.0" r="20.0" fill="#2e6a8e"/>
<circle cx="785.0" cy="379.0" r="20.0" fill="#2e6a8e"/>
<circle cx="806.0" cy="363.0" r="22.0" fill="#2e6a8e"/>
<circle cx="784.0" cy="421.0" r="27.0" fill="#2e6a8e"/>
<circle cx="853.0" cy="418.0" r="28.0" fill="#2e6a8e"/>
<circle cx="870.0" cy="366.0" r="22.0" fill="#2e6a8e"/>
<circle cx="923.0" cy="398.0" r="22.0" fill="#2e6a8e"/>
<circle cx="829.0" cy="441.0" r="24.0" fill="#2e6a8e"/>
<circle cx="863.0" cy="446.0" r="22.0" fill="#2e6a8e"/>
<circle cx="913.0" cy="439.0" r="24.0" fill="#2e6a8e"/>
<circle cx="928.0" cy="463.0" r="22.0" fill="#2e6a8e"/>
<circle cx="810.0" cy="469.0" r="26.0" fill="#2e6a8e"/>
<circle cx="848.0" cy="491.0" r="28.0" fill="#2e6a8e"/>
<circle cx="889.0" cy="495.0" r="22.0" fill="#2e6a8e"/>
<circle cx="932.0" cy="501.0" r="24.0" fill="#2e6a8e"/>
<circle cx="955.0" cy="482.0" r="24.0" fill="#2e6a8e"/>
<circle cx="960.0" cy="383.0" r="20.0" fill="#2e6a8e"/>
<circle cx="820.0" cy="499.0" r="20.0" fill="#2e6a8e"/>
<circle cx="898.0" cy="465.0" r="20.0" fill="#2e6a8e"/>
<circle cx="849.0" cy="381.0" r="22.0" fill="#2e6a8e"/>
<circle cx="819.0" cy="395.0" r="26.0" fill="#2e6a8e"/>
<circle cx="889.0" cy="401.0" r="26.0" fill="#2e6a8e"/>
<circle cx="916.0" cy="370.0" r="23.0" fill="#2e6a8e"/>
<circle cx="951.0" cy="428.0" r="27.0" fill="#2e6a8e"/>
<circle cx="1006.0" cy="379.0" r="26.0" fill="#2e6a8e"/>
<circle cx="976.0" cy="379.0" r="22.0" fill="#2e6a8e"/>
<circle cx="1078.0" cy="386.0" r="22.0" fill="#2e6a8e"/>
<circle cx="1117.0" cy="405.0" r="30.0" fill="#2e6a8e"/>
<circle cx="991.0" cy="413.0" r="24.0" fill="#2e6a8e"/>
<circle cx="1078.0" cy="413.0" r="24.0" fill="#2e6a8e"/>
<circle cx="988.0" cy="443.0" r="26.0" fill="#2e6a8e"/>
<circle cx="1036.0" cy="452.0" r="22.0" fill="#2e6a8e"/>
<circle cx="1074.0" cy="454.0" r="26.0" fill="#2e6a8e"/>
<circle cx="1113.0" cy="454.0" r="24.0" fill="#2e6a8e"/>
<circle cx="999.0" cy="476.0" r="24.0" fill="#2e6a8e"/>
<circle cx="1038.0" cy="486.0" r="28.0" fill="#2e6a8e"/>
<circle cx="1078.0" cy="491.0" r="26.0" fill="#2e6a8e"/>
<circle cx="1121.0" cy="482.0" r="24.0" fill="#2e6a8e"/>
<circle cx="971.0" cy="482.0" r="20.0" fill="#2e6a8e"/>
<circle cx="988.0" cy="503.0" r="20.0" fill="#2e6a8e"/>
<circle cx="1130.0" cy="373.0" r="20.0" fill="#2e6a8e"/>
<circle cx="1047.0" cy="425.0" r="27.0" fill="#2e6a8e"/>
<circle cx="1130.0" cy="410.0" r="27.0" fill="#2e6a8e"/>
</g>
<g filter="url(#bl)">
<circle cx="734" cy="287" r="11" fill="#6fcf57"/>
<circle cx="858" cy="281" r="10" fill="#6fcf57"/>
<circle cx="1021" cy="403" r="11" fill="#6fcf57"/>
<circle cx="944" cy="154" r="9" fill="#6fcf57"/>
<circle cx="870" cy="137" r="8" fill="#6fcf57"/>
<circle cx="979" cy="102" r="8" fill="#6fcf57"/>
<circle cx="1012" cy="127" r="8" fill="#6fcf57"/>
<circle cx="776" cy="231" r="8" fill="#6fcf57"/>
<circle cx="780" cy="302" r="8" fill="#6fcf57"/>
<circle cx="809" cy="254" r="8" fill="#6fcf57"/>
<circle cx="935" cy="264" r="8" fill="#6fcf57"/>
<circle cx="856" cy="335" r="8" fill="#6fcf57"/>
<circle cx="810" cy="433" r="8" fill="#6fcf57"/>
<circle cx="779" cy="443" r="8" fill="#6fcf57"/>
<circle cx="683" cy="411" r="7" fill="#6fcf57"/>
<circle cx="1000" cy="300" r="8" fill="#6fcf57"/>
<circle cx="1039" cy="154" r="7" fill="#6fcf57"/>
</g>
<circle cx="635.0" cy="102.0" r="22.2" fill="none" stroke="#3fae7a" stroke-opacity="0.5" stroke-width="1.3"/>
<circle cx="656.0" cy="81.0" r="15.2" fill="none" stroke="#3fae7a" stroke-opacity="0.5" stroke-width="1.3"/>
<circle cx="683.0" cy="98.0" r="18.2" fill="none" stroke="#3fae7a" stroke-opacity="0.5" stroke-width="1.3"/>
<circle cx="708.0" cy="89.0" r="15.2" fill="none" stroke="#3fae7a" stroke-opacity="0.5" stroke-width="1.3"/>
<circle cx="658.0" cy="135.0" r="22.2" fill="none" stroke="#3fae7a" stroke-opacity="0.5" stroke-width="1.3"/>
<circle cx="710.0" cy="139.0" r="22.2" fill="none" stroke="#3fae7a" stroke-opacity="0.5" stroke-width="1.3"/>
<circle cx="757.0" cy="96.0" r="18.2" fill="none" stroke="#3fae7a" stroke-opacity="0.5" stroke-width="1.3"/>
<circle cx="793.0" cy="87.0" r="17.2" fill="none" stroke="#3fae7a" stroke-opacity="0.5" stroke-width="1.3"/>
<circle cx="670.0" cy="162.0" r="18.2" fill="none" stroke="#3fae7a" stroke-opacity="0.5" stroke-width="1.3"/>
<circle cx="693.0" cy="170.0" r="23.2" fill="none" stroke="#3fae7a" stroke-opacity="0.5" stroke-width="1.3"/>
<circle cx="637.0" cy="174.0" r="20.2" fill="none" stroke="#3fae7a" stroke-opacity="0.5" stroke-width="1.3"/>
<circle cx="786.0" cy="164.0" r="22.2" fill="none" stroke="#3fae7a" stroke-opacity="0.5" stroke-width="1.3"/>
<circle cx="708.0" cy="205.0" r="16.2" fill="none" stroke="#3fae7a" stroke-opacity="0.5" stroke-width="1.3"/>
<circle cx="670.0" cy="199.0" r="21.2" fill="none" stroke="#3fae7a" stroke-opacity="0.5" stroke-width="1.3"/>
<circle cx="759.0" cy="135.0" r="22.2" fill="none" stroke="#3fae7a" stroke-opacity="0.5" stroke-width="1.3"/>
<circle cx="784.0" cy="207.0" r="18.2" fill="none" stroke="#3fae7a" stroke-opacity="0.5" stroke-width="1.3"/>
<circle cx="730.0" cy="106.0" r="19.2" fill="none" stroke="#3fae7a" stroke-opacity="0.5" stroke-width="1.3"/>
<circle cx="736.0" cy="165.0" r="19.2" fill="none" stroke="#3fae7a" stroke-opacity="0.5" stroke-width="1.3"/>
<circle cx="739.0" cy="206.0" r="20.2" fill="none" stroke="#3fae7a" stroke-opacity="0.5" stroke-width="1.3"/>
<circle cx="807.0" cy="79.0" r="17.2" fill="none" stroke="#3fae7a" stroke-opacity="0.5" stroke-width="1.3"/>
<circle cx="836.0" cy="135.0" r="17.2" fill="none" stroke="#3fae7a" stroke-opacity="0.5" stroke-width="1.3"/>
<circle cx="820.0" cy="143.0" r="15.2" fill="none" stroke="#3fae7a" stroke-opacity="0.5" stroke-width="1.3"/>
<circle cx="896.0" cy="108.0" r="15.2" fill="none" stroke="#3fae7a" stroke-opacity="0.5" stroke-width="1.3"/>
<circle cx="931.0" cy="106.0" r="22.2" fill="none" stroke="#3fae7a" stroke-opacity="0.5" stroke-width="1.3"/>
<circle cx="948.0" cy="81.0" r="15.2" fill="none" stroke="#3fae7a" stroke-opacity="0.5" stroke-width="1.3"/>
<circle cx="902.0" cy="133.0" r="20.2" fill="none" stroke="#3fae7a" stroke-opacity="0.5" stroke-width="1.3"/>
<circle cx="925.0" cy="158.0" r="20.2" fill="none" stroke="#3fae7a" stroke-opacity="0.5" stroke-width="1.3"/>
<circle cx="960.0" cy="127.0" r="15.2" fill="none" stroke="#3fae7a" stroke-opacity="0.5" stroke-width="1.3"/>
<circle cx="851.0" cy="162.0" r="22.2" fill="none" stroke="#3fae7a" stroke-opacity="0.5" stroke-width="1.3"/>
<circle cx="842.0" cy="187.0" r="22.2" fill="none" stroke="#3fae7a" stroke-opacity="0.5" stroke-width="1.3"/>
<circle cx="805.0" cy="168.0" r="15.2" fill="none" stroke="#3fae7a" stroke-opacity="0.5" stroke-width="1.3"/>
<circle cx="809.0" cy="191.0" r="18.2" fill="none" stroke="#3fae7a" stroke-opacity="0.5" stroke-width="1.3"/>
<circle cx="886.0" cy="179.0" r="22.2" fill="none" stroke="#3fae7a" stroke-opacity="0.5" stroke-width="1.3"/>
<circle cx="936.0" cy="199.0" r="20.2" fill="none" stroke="#3fae7a" stroke-opacity="0.5" stroke-width="1.3"/>
<circle cx="960.0" cy="183.0" r="17.2" fill="none" stroke="#3fae7a" stroke-opacity="0.5" stroke-width="1.3"/>
<circle cx="861.0" cy="212.0" r="15.2" fill="none" stroke="#3fae7a" stroke-opacity="0.5" stroke-width="1.3"/>
<circle cx="867.0" cy="83.0" r="13.2" fill="none" stroke="#3fae7a" stroke-opacity="0.5" stroke-width="1.3"/>
<circle cx="907.0" cy="83.0" r="17.2" fill="none" stroke="#3fae7a" stroke-opacity="0.5" stroke-width="1.3"/>
<circle cx="808.0" cy="113.0" r="23.2" fill="none" stroke="#3fae7a" stroke-opacity="0.5" stroke-width="1.3"/>
<circle cx="860.0" cy="111.0" r="22.2" fill="none" stroke="#3fae7a" stroke-opacity="0.5" stroke-width="1.3"/>
<circle cx="901.0" cy="216.0" r="21.2" fill="none" stroke="#3fae7a" stroke-opacity="0.5" stroke-width="1.3"/>
<circle cx="986.0" cy="85.0" r="20.2" fill="none" stroke="#3fae7a" stroke-opacity="0.5" stroke-width="1.3"/>
<circle cx="979.0" cy="129.0" r="22.2" fill="none" stroke="#3fae7a" stroke-opacity="0.5" stroke-width="1.3"/>
<circle cx="1021.0" cy="135.0" r="20.2" fill="none" stroke="#3fae7a" stroke-opacity="0.5" stroke-width="1.3"/>
<circle cx="1052.0" cy="133.0" r="20.2" fill="none" stroke="#3fae7a" stroke-opacity="0.5" stroke-width="1.3"/>
<circle cx="988.0" cy="152.0" r="17.2" fill="none" stroke="#3fae7a" stroke-opacity="0.5" stroke-width="1.3"/>
<circle cx="973.0" cy="183.0" r="20.2" fill="none" stroke="#3fae7a" stroke-opacity="0.5" stroke-width="1.3"/>
<circle cx="1029.0" cy="174.0" r="20.2" fill="none" stroke="#3fae7a" stroke-opacity="0.5" stroke-width="1.3"/>
<circle cx="1033.0" cy="203.0" r="22.2" fill="none" stroke="#3fae7a" stroke-opacity="0.5" stroke-width="1.3"/>
<circle cx="988.0" cy="210.0" r="17.2" fill="none" stroke="#3fae7a" stroke-opacity="0.5" stroke-width="1.3"/>
<circle cx="1128.0" cy="174.0" r="15.2" fill="none" stroke="#3fae7a" stroke-opacity="0.5" stroke-width="1.3"/>
<circle cx="1075.0" cy="199.0" r="17.2" fill="none" stroke="#3fae7a" stroke-opacity="0.5" stroke-width="1.3"/>
<circle cx="1031.0" cy="102.0" r="21.2" fill="none" stroke="#3fae7a" stroke-opacity="0.5" stroke-width="1.3"/>
<circle cx="1062.0" cy="159.0" r="21.2" fill="none" stroke="#3fae7a" stroke-opacity="0.5" stroke-width="1.3"/>
<circle cx="1102.0" cy="173.0" r="21.2" fill="none" stroke="#3fae7a" stroke-opacity="0.5" stroke-width="1.3"/>
<circle cx="1003.0" cy="182.0" r="22.2" fill="none" stroke="#3fae7a" stroke-opacity="0.5" stroke-width="1.3"/>
<circle cx="1111.0" cy="212.0" r="22.2" fill="none" stroke="#3fae7a" stroke-opacity="0.5" stroke-width="1.3"/>
<circle cx="637.0" cy="231.0" r="20.2" fill="none" stroke="#3fae7a" stroke-opacity="0.5" stroke-width="1.3"/>
<circle cx="686.0" cy="237.0" r="22.2" fill="none" stroke="#3fae7a" stroke-opacity="0.5" stroke-width="1.3"/>
<circle cx="719.0" cy="233.0" r="18.2" fill="none" stroke="#3fae7a" stroke-opacity="0.5" stroke-width="1.3"/>
<circle cx="637.0" cy="260.0" r="20.2" fill="none" stroke="#3fae7a" stroke-opacity="0.5" stroke-width="1.3"/>
<circle cx="671.0" cy="268.0" r="18.2" fill="none" stroke="#3fae7a" stroke-opacity="0.5" stroke-width="1.3"/>
<circle cx="696.0" cy="281.0" r="18.2" fill="none" stroke="#3fae7a" stroke-opacity="0.5" stroke-width="1.3"/>
<circle cx="635.0" cy="287.0" r="20.2" fill="none" stroke="#3fae7a" stroke-opacity="0.5" stroke-width="1.3"/>
<circle cx="709.0" cy="302.0" r="24.2" fill="none" stroke="#3fae7a" stroke-opacity="0.5" stroke-width="1.3"/>
<circle cx="660.0" cy="308.0" r="20.2" fill="none" stroke="#3fae7a" stroke-opacity="0.5" stroke-width="1.3"/>
<circle cx="635.0" cy="327.0" r="22.2" fill="none" stroke="#3fae7a" stroke-opacity="0.5" stroke-width="1.3"/>
<circle cx="677.0" cy="348.0" r="22.2" fill="none" stroke="#3fae7a" stroke-opacity="0.5" stroke-width="1.3"/>
<circle cx="749.0" cy="302.0" r="18.2" fill="none" stroke="#3fae7a" stroke-opacity="0.5" stroke-width="1.3"/>
<circle cx="763.0" cy="327.0" r="20.2" fill="none" stroke="#3fae7a" stroke-opacity="0.5" stroke-width="1.3"/>
<circle cx="753.0" cy="352.0" r="18.2" fill="none" stroke="#3fae7a" stroke-opacity="0.5" stroke-width="1.3"/>
<circle cx="788.0" cy="273.0" r="22.2" fill="none" stroke="#3fae7a" stroke-opacity="0.5" stroke-width="1.3"/>
<circle cx="776.0" cy="254.0" r="15.2" fill="none" stroke="#3fae7a" stroke-opacity="0.5" stroke-width="1.3"/>
<circle cx="795.0" cy="228.0" r="15.2" fill="none" stroke="#3fae7a" stroke-opacity="0.5" stroke-width="1.3"/>
<circle cx="738.0" cy="260.0" r="21.2" fill="none" stroke="#3fae7a" stroke-opacity="0.5" stroke-width="1.3"/>
<circle cx="715.0" cy="347.0" r="20.2" fill="none" stroke="#3fae7a" stroke-opacity="0.5" stroke-width="1.3"/>
<circle cx="794.0" cy="320.0" r="21.2" fill="none" stroke="#3fae7a" stroke-opacity="0.5" stroke-width="1.3"/>
<circle cx="809.0" cy="235.0" r="22.2" fill="none" stroke="#3fae7a" stroke-opacity="0.5" stroke-width="1.3"/>
<circle cx="866.0" cy="245.0" r="24.2" fill="none" stroke="#3fae7a" stroke-opacity="0.5" stroke-width="1.3"/>
<circle cx="856.0" cy="224.0" r="16.2" fill="none" stroke="#3fae7a" stroke-opacity="0.5" stroke-width="1.3"/>
<circle cx="923.0" cy="245.0" r="22.2" fill="none" stroke="#3fae7a" stroke-opacity="0.5" stroke-width="1.3"/>
<circle cx="803.0" cy="273.0" r="16.2" fill="none" stroke="#3fae7a" stroke-opacity="0.5" stroke-width="1.3"/>
<circle cx="826.0" cy="287.0" r="18.2" fill="none" stroke="#3fae7a" stroke-opacity="0.5" stroke-width="1.3"/>
<circle cx="841.0" cy="298.0" r="18.2" fill="none" stroke="#3fae7a" stroke-opacity="0.5" stroke-width="1.3"/>
<circle cx="828.0" cy="315.0" r="18.2" fill="none" stroke="#3fae7a" stroke-opacity="0.5" stroke-width="1.3"/>
<circle cx="868.0" cy="317.0" r="20.2" fill="none" stroke="#3fae7a" stroke-opacity="0.5" stroke-width="1.3"/>
<circle cx="845.0" cy="340.0" r="22.2" fill="none" stroke="#3fae7a" stroke-opacity="0.5" stroke-width="1.3"/>
<circle cx="872.0" cy="350.0" r="22.2" fill="none" stroke="#3fae7a" stroke-opacity="0.5" stroke-width="1.3"/>
<circle cx="914.0" cy="270.0" r="20.2" fill="none" stroke="#3fae7a" stroke-opacity="0.5" stroke-width="1.3"/>
<circle cx="950.0" cy="281.0" r="22.2" fill="none" stroke="#3fae7a" stroke-opacity="0.5" stroke-width="1.3"/>
<circle cx="929.0" cy="298.0" r="18.2" fill="none" stroke="#3fae7a" stroke-opacity="0.5" stroke-width="1.3"/>
<circle cx="950.0" cy="310.0" r="16.2" fill="none" stroke="#3fae7a" stroke-opacity="0.5" stroke-width="1.3"/>
<circle cx="935.0" cy="336.0" r="22.2" fill="none" stroke="#3fae7a" stroke-opacity="0.5" stroke-width="1.3"/>
<circle cx="898.0" cy="348.0" r="18.2" fill="none" stroke="#3fae7a" stroke-opacity="0.5" stroke-width="1.3"/>
<circle cx="967.0" cy="335.0" r="16.2" fill="none" stroke="#3fae7a" stroke-opacity="0.5" stroke-width="1.3"/>
<circle cx="824.0" cy="222.0" r="16.2" fill="none" stroke="#3fae7a" stroke-opacity="0.5" stroke-width="1.3"/>
<circle cx="836.0" cy="266.0" r="18.2" fill="none" stroke="#3fae7a" stroke-opacity="0.5" stroke-width="1.3"/>
<circle cx="885.0" cy="286.0" r="20.2" fill="none" stroke="#3fae7a" stroke-opacity="0.5" stroke-width="1.3"/>
<circle cx="906.0" cy="315.0" r="21.2" fill="none" stroke="#3fae7a" stroke-opacity="0.5" stroke-width="1.3"/>
<circle cx="976.0" cy="246.0" r="23.2" fill="none" stroke="#3fae7a" stroke-opacity="0.5" stroke-width="1.3"/>
<circle cx="1013.0" cy="252.0" r="16.2" fill="none" stroke="#3fae7a" stroke-opacity="0.5" stroke-width="1.3"/>
<circle cx="1019.0" cy="283.0" r="18.2" fill="none" stroke="#3fae7a" stroke-opacity="0.5" stroke-width="1.3"/>
<circle cx="988.0" cy="296.0" r="20.2" fill="none" stroke="#3fae7a" stroke-opacity="0.5" stroke-width="1.3"/>
<circle cx="1034.0" cy="310.0" r="20.2" fill="none" stroke="#3fae7a" stroke-opacity="0.5" stroke-width="1.3"/>
<circle cx="1066.0" cy="302.0" r="20.2" fill="none" stroke="#3fae7a" stroke-opacity="0.5" stroke-width="1.3"/>
<circle cx="1085.0" cy="287.0" r="20.2" fill="none" stroke="#3fae7a" stroke-opacity="0.5" stroke-width="1.3"/>
<circle cx="1131.0" cy="291.0" r="16.2" fill="none" stroke="#3fae7a" stroke-opacity="0.5" stroke-width="1.3"/>
<circle cx="998.0" cy="325.0" r="18.2" fill="none" stroke="#3fae7a" stroke-opacity="0.5" stroke-width="1.3"/>
<circle cx="1097.0" cy="327.0" r="20.2" fill="none" stroke="#3fae7a" stroke-opacity="0.5" stroke-width="1.3"/>
<circle cx="1124.0" cy="335.0" r="18.2" fill="none" stroke="#3fae7a" stroke-opacity="0.5" stroke-width="1.3"/>
<circle cx="1022.0" cy="344.0" r="18.2" fill="none" stroke="#3fae7a" stroke-opacity="0.5" stroke-width="1.3"/>
<circle cx="971.0" cy="281.0" r="16.2" fill="none" stroke="#3fae7a" stroke-opacity="0.5" stroke-width="1.3"/>
<circle cx="986.0" cy="218.0" r="15.2" fill="none" stroke="#3fae7a" stroke-opacity="0.5" stroke-width="1.3"/>
<circle cx="1030.0" cy="220.0" r="13.2" fill="none" stroke="#3fae7a" stroke-opacity="0.5" stroke-width="1.3"/>
<circle cx="1061.0" cy="239.0" r="20.2" fill="none" stroke="#3fae7a" stroke-opacity="0.5" stroke-width="1.3"/>
<circle cx="1112.0" cy="235.0" r="20.2" fill="none" stroke="#3fae7a" stroke-opacity="0.5" stroke-width="1.3"/>
<circle cx="1085.0" cy="348.0" r="16.2" fill="none" stroke="#3fae7a" stroke-opacity="0.5" stroke-width="1.3"/>
<circle cx="1044.0" cy="258.0" r="21.2" fill="none" stroke="#3fae7a" stroke-opacity="0.5" stroke-width="1.3"/>
<circle cx="1056.0" cy="341.0" r="20.2" fill="none" stroke="#3fae7a" stroke-opacity="0.5" stroke-width="1.3"/>
<circle cx="1108.0" cy="368.0" r="20.2" fill="none" stroke="#3fae7a" stroke-opacity="0.5" stroke-width="1.3"/>
<circle cx="1044.0" cy="379.0" r="22.2" fill="none" stroke="#3fae7a" stroke-opacity="0.5" stroke-width="1.3"/>
<circle cx="633.0" cy="383.0" r="20.2" fill="none" stroke="#3fae7a" stroke-opacity="0.5" stroke-width="1.3"/>
<circle cx="635.0" cy="413.0" r="20.2" fill="none" stroke="#3fae7a" stroke-opacity="0.5" stroke-width="1.3"/>
<circle cx="678.0" cy="371.0" r="20.2" fill="none" stroke="#3fae7a" stroke-opacity="0.5" stroke-width="1.3"/>
<circle cx="702.0" cy="390.0" r="18.2" fill="none" stroke="#3fae7a" stroke-opacity="0.5" stroke-width="1.3"/>
<circle cx="734.0" cy="377.0" r="20.2" fill="none" stroke="#3fae7a" stroke-opacity="0.5" stroke-width="1.3"/>
<circle cx="758.0" cy="373.0" r="22.2" fill="none" stroke="#3fae7a" stroke-opacity="0.5" stroke-width="1.3"/>
<circle cx="710.0" cy="424.0" r="24.2" fill="none" stroke="#3fae7a" stroke-opacity="0.5" stroke-width="1.3"/>
<circle cx="740.0" cy="411.0" r="20.2" fill="none" stroke="#3fae7a" stroke-opacity="0.5" stroke-width="1.3"/>
<circle cx="672.0" cy="439.0" r="20.2" fill="none" stroke="#3fae7a" stroke-opacity="0.5" stroke-width="1.3"/>
<circle cx="638.0" cy="452.0" r="20.2" fill="none" stroke="#3fae7a" stroke-opacity="0.5" stroke-width="1.3"/>
<circle cx="663.0" cy="465.0" r="20.2" fill="none" stroke="#3fae7a" stroke-opacity="0.5" stroke-width="1.3"/>
<circle cx="693.0" cy="461.0" r="20.2" fill="none" stroke="#3fae7a" stroke-opacity="0.5" stroke-width="1.3"/>
<circle cx="633.0" cy="478.0" r="18.2" fill="none" stroke="#3fae7a" stroke-opacity="0.5" stroke-width="1.3"/>
<circle cx="650.0" cy="499.0" r="18.2" fill="none" stroke="#3fae7a" stroke-opacity="0.5" stroke-width="1.3"/>
<circle cx="683.0" cy="491.0" r="18.2" fill="none" stroke="#3fae7a" stroke-opacity="0.5" stroke-width="1.3"/>
<circle cx="715.0" cy="499.0" r="20.2" fill="none" stroke="#3fae7a" stroke-opacity="0.5" stroke-width="1.3"/>
<circle cx="732.0" cy="461.0" r="16.2" fill="none" stroke="#3fae7a" stroke-opacity="0.5" stroke-width="1.3"/>
<circle cx="758.0" cy="452.0" r="22.2" fill="none" stroke="#3fae7a" stroke-opacity="0.5" stroke-width="1.3"/>
<circle cx="785.0" cy="480.0" r="20.2" fill="none" stroke="#3fae7a" stroke-opacity="0.5" stroke-width="1.3"/>
<circle cx="758.0" cy="495.0" r="20.2" fill="none" stroke="#3fae7a" stroke-opacity="0.5" stroke-width="1.3"/>
<circle cx="736.0" cy="486.0" r="16.2" fill="none" stroke="#3fae7a" stroke-opacity="0.5" stroke-width="1.3"/>
<circle cx="785.0" cy="379.0" r="16.2" fill="none" stroke="#3fae7a" stroke-opacity="0.5" stroke-width="1.3"/>
<circle cx="806.0" cy="363.0" r="18.2" fill="none" stroke="#3fae7a" stroke-opacity="0.5" stroke-width="1.3"/>
<circle cx="784.0" cy="421.0" r="23.2" fill="none" stroke="#3fae7a" stroke-opacity="0.5" stroke-width="1.3"/>
<circle cx="853.0" cy="418.0" r="24.2" fill="none" stroke="#3fae7a" stroke-opacity="0.5" stroke-width="1.3"/>
<circle cx="870.0" cy="366.0" r="18.2" fill="none" stroke="#3fae7a" stroke-opacity="0.5" stroke-width="1.3"/>
<circle cx="923.0" cy="398.0" r="18.2" fill="none" stroke="#3fae7a" stroke-opacity="0.5" stroke-width="1.3"/>
<circle cx="829.0" cy="441.0" r="20.2" fill="none" stroke="#3fae7a" stroke-opacity="0.5" stroke-width="1.3"/>
<circle cx="863.0" cy="446.0" r="18.2" fill="none" stroke="#3fae7a" stroke-opacity="0.5" stroke-width="1.3"/>
<circle cx="913.0" cy="439.0" r="20.2" fill="none" stroke="#3fae7a" stroke-opacity="0.5" stroke-width="1.3"/>
<circle cx="928.0" cy="463.0" r="18.2" fill="none" stroke="#3fae7a" stroke-opacity="0.5" stroke-width="1.3"/>
<circle cx="810.0" cy="469.0" r="22.2" fill="none" stroke="#3fae7a" stroke-opacity="0.5" stroke-width="1.3"/>
<circle cx="848.0" cy="491.0" r="24.2" fill="none" stroke="#3fae7a" stroke-opacity="0.5" stroke-width="1.3"/>
<circle cx="889.0" cy="495.0" r="18.2" fill="none" stroke="#3fae7a" stroke-opacity="0.5" stroke-width="1.3"/>
<circle cx="932.0" cy="501.0" r="20.2" fill="none" stroke="#3fae7a" stroke-opacity="0.5" stroke-width="1.3"/>
<circle cx="955.0" cy="482.0" r="20.2" fill="none" stroke="#3fae7a" stroke-opacity="0.5" stroke-width="1.3"/>
<circle cx="960.0" cy="383.0" r="16.2" fill="none" stroke="#3fae7a" stroke-opacity="0.5" stroke-width="1.3"/>
<circle cx="820.0" cy="499.0" r="16.2" fill="none" stroke="#3fae7a" stroke-opacity="0.5" stroke-width="1.3"/>
<circle cx="898.0" cy="465.0" r="16.2" fill="none" stroke="#3fae7a" stroke-opacity="0.5" stroke-width="1.3"/>
<circle cx="849.0" cy="381.0" r="18.2" fill="none" stroke="#3fae7a" stroke-opacity="0.5" stroke-width="1.3"/>
<circle cx="819.0" cy="395.0" r="22.2" fill="none" stroke="#3fae7a" stroke-opacity="0.5" stroke-width="1.3"/>
<circle cx="889.0" cy="401.0" r="22.2" fill="none" stroke="#3fae7a" stroke-opacity="0.5" stroke-width="1.3"/>
<circle cx="916.0" cy="370.0" r="19.2" fill="none" stroke="#3fae7a" stroke-opacity="0.5" stroke-width="1.3"/>
<circle cx="951.0" cy="428.0" r="23.2" fill="none" stroke="#3fae7a" stroke-opacity="0.5" stroke-width="1.3"/>
<circle cx="1006.0" cy="379.0" r="22.2" fill="none" stroke="#3fae7a" stroke-opacity="0.5" stroke-width="1.3"/>
<circle cx="976.0" cy="379.0" r="18.2" fill="none" stroke="#3fae7a" stroke-opacity="0.5" stroke-width="1.3"/>
<circle cx="1078.0" cy="386.0" r="18.2" fill="none" stroke="#3fae7a" stroke-opacity="0.5" stroke-width="1.3"/>
<circle cx="1117.0" cy="405.0" r="26.2" fill="none" stroke="#3fae7a" stroke-opacity="0.5" stroke-width="1.3"/>
<circle cx="991.0" cy="413.0" r="20.2" fill="none" stroke="#3fae7a" stroke-opacity="0.5" stroke-width="1.3"/>
<circle cx="1078.0" cy="413.0" r="20.2" fill="none" stroke="#3fae7a" stroke-opacity="0.5" stroke-width="1.3"/>
<circle cx="988.0" cy="443.0" r="22.2" fill="none" stroke="#3fae7a" stroke-opacity="0.5" stroke-width="1.3"/>
<circle cx="1036.0" cy="452.0" r="18.2" fill="none" stroke="#3fae7a" stroke-opacity="0.5" stroke-width="1.3"/>
<circle cx="1074.0" cy="454.0" r="22.2" fill="none" stroke="#3fae7a" stroke-opacity="0.5" stroke-width="1.3"/>
<circle cx="1113.0" cy="454.0" r="20.2" fill="none" stroke="#3fae7a" stroke-opacity="0.5" stroke-width="1.3"/>
<circle cx="999.0" cy="476.0" r="20.2" fill="none" stroke="#3fae7a" stroke-opacity="0.5" stroke-width="1.3"/>
<circle cx="1038.0" cy="486.0" r="24.2" fill="none" stroke="#3fae7a" stroke-opacity="0.5" stroke-width="1.3"/>
<circle cx="1078.0" cy="491.0" r="22.2" fill="none" stroke="#3fae7a" stroke-opacity="0.5" stroke-width="1.3"/>
<circle cx="1121.0" cy="482.0" r="20.2" fill="none" stroke="#3fae7a" stroke-opacity="0.5" stroke-width="1.3"/>
<circle cx="971.0" cy="482.0" r="16.2" fill="none" stroke="#3fae7a" stroke-opacity="0.5" stroke-width="1.3"/>
<circle cx="988.0" cy="503.0" r="16.2" fill="none" stroke="#3fae7a" stroke-opacity="0.5" stroke-width="1.3"/>
<circle cx="1130.0" cy="373.0" r="16.2" fill="none" stroke="#3fae7a" stroke-opacity="0.5" stroke-width="1.3"/>
<circle cx="1047.0" cy="425.0" r="23.2" fill="none" stroke="#3fae7a" stroke-opacity="0.5" stroke-width="1.3"/>
<circle cx="1130.0" cy="410.0" r="23.2" fill="none" stroke="#3fae7a" stroke-opacity="0.5" stroke-width="1.3"/>
<circle cx="907.0" cy="83.0" r="15.4" fill="#2f6c8e"/>
<circle cx="1052.0" cy="133.0" r="18.4" fill="#2f6c8e"/>
<circle cx="1029.0" cy="174.0" r="18.4" fill="#2f6c8e"/>
<circle cx="914.0" cy="270.0" r="18.4" fill="#2f6c8e"/>
<circle cx="929.0" cy="298.0" r="16.4" fill="#2f6c8e"/>
<circle cx="824.0" cy="222.0" r="14.4" fill="#2f6c8e"/>
<circle cx="1019.0" cy="283.0" r="16.4" fill="#2f6c8e"/>
<circle cx="1034.0" cy="310.0" r="18.4" fill="#2f6c8e"/>
<circle cx="1022.0" cy="344.0" r="16.4" fill="#2f6c8e"/>
<circle cx="1061.0" cy="239.0" r="18.4" fill="#2f6c8e"/>
<circle cx="1112.0" cy="235.0" r="18.4" fill="#2f6c8e"/>
<circle cx="785.0" cy="379.0" r="14.4" fill="#2f6c8e"/>
<circle cx="960.0" cy="383.0" r="14.4" fill="#2f6c8e"/>
<circle cx="898.0" cy="465.0" r="14.4" fill="#2f6c8e"/>
<circle cx="849.0" cy="381.0" r="16.4" fill="#2f6c8e"/>
<circle cx="916.0" cy="370.0" r="17.4" fill="#2f6c8e"/>
<circle cx="1078.0" cy="413.0" r="18.4" fill="#2f6c8e"/>
<circle cx="1036.0" cy="452.0" r="16.4" fill="#2f6c8e"/>
<circle cx="1130.0" cy="373.0" r="14.4" fill="#2f6c8e"/>
<circle cx="670.0" cy="162.0" r="16.4" fill="#3f4a8a"/>
<circle cx="708.0" cy="205.0" r="14.4" fill="#3f4a8a"/>
<circle cx="784.0" cy="207.0" r="16.4" fill="#3f4a8a"/>
<circle cx="730.0" cy="106.0" r="17.4" fill="#3f4a8a"/>
<circle cx="736.0" cy="165.0" r="17.4" fill="#3f4a8a"/>
<circle cx="739.0" cy="206.0" r="18.4" fill="#3f4a8a"/>
<circle cx="836.0" cy="135.0" r="15.4" fill="#3f4a8a"/>
<circle cx="820.0" cy="143.0" r="13.4" fill="#3f4a8a"/>
<circle cx="896.0" cy="108.0" r="13.4" fill="#3f4a8a"/>
<circle cx="931.0" cy="106.0" r="20.4" fill="#3f4a8a"/>
<circle cx="902.0" cy="133.0" r="18.4" fill="#3f4a8a"/>
<circle cx="851.0" cy="162.0" r="20.4" fill="#3f4a8a"/>
<circle cx="842.0" cy="187.0" r="20.4" fill="#3f4a8a"/>
<circle cx="809.0" cy="191.0" r="16.4" fill="#3f4a8a"/>
<circle cx="936.0" cy="199.0" r="18.4" fill="#3f4a8a"/>
<circle cx="960.0" cy="183.0" r="15.4" fill="#3f4a8a"/>
<circle cx="861.0" cy="212.0" r="13.4" fill="#3f4a8a"/>
<circle cx="867.0" cy="83.0" r="11.4" fill="#3f4a8a"/>
<circle cx="901.0" cy="216.0" r="19.4" fill="#3f4a8a"/>
<circle cx="1021.0" cy="135.0" r="18.4" fill="#3f4a8a"/>
<circle cx="988.0" cy="152.0" r="15.4" fill="#3f4a8a"/>
<circle cx="988.0" cy="210.0" r="15.4" fill="#3f4a8a"/>
<circle cx="1128.0" cy="174.0" r="13.4" fill="#3f4a8a"/>
<circle cx="1075.0" cy="199.0" r="15.4" fill="#3f4a8a"/>
<circle cx="1031.0" cy="102.0" r="19.4" fill="#3f4a8a"/>
<circle cx="1062.0" cy="159.0" r="19.4" fill="#3f4a8a"/>
<circle cx="1102.0" cy="173.0" r="19.4" fill="#3f4a8a"/>
<circle cx="1003.0" cy="182.0" r="20.4" fill="#3f4a8a"/>
<circle cx="1111.0" cy="212.0" r="20.4" fill="#3f4a8a"/>
<circle cx="637.0" cy="231.0" r="18.4" fill="#3f4a8a"/>
<circle cx="696.0" cy="281.0" r="16.4" fill="#3f4a8a"/>
<circle cx="749.0" cy="302.0" r="16.4" fill="#3f4a8a"/>
<circle cx="763.0" cy="327.0" r="18.4" fill="#3f4a8a"/>
<circle cx="788.0" cy="273.0" r="20.4" fill="#3f4a8a"/>
<circle cx="776.0" cy="254.0" r="13.4" fill="#3f4a8a"/>
<circle cx="826.0" cy="287.0" r="16.4" fill="#3f4a8a"/>
<circle cx="828.0" cy="315.0" r="16.4" fill="#3f4a8a"/>
<circle cx="868.0" cy="317.0" r="18.4" fill="#3f4a8a"/>
<circle cx="845.0" cy="340.0" r="20.4" fill="#3f4a8a"/>
<circle cx="950.0" cy="310.0" r="14.4" fill="#3f4a8a"/>
<circle cx="898.0" cy="348.0" r="16.4" fill="#3f4a8a"/>
<circle cx="967.0" cy="335.0" r="14.4" fill="#3f4a8a"/>
<circle cx="836.0" cy="266.0" r="16.4" fill="#3f4a8a"/>
<circle cx="885.0" cy="286.0" r="18.4" fill="#3f4a8a"/>
<circle cx="906.0" cy="315.0" r="19.4" fill="#3f4a8a"/>
<circle cx="976.0" cy="246.0" r="21.4" fill="#3f4a8a"/>
<circle cx="1013.0" cy="252.0" r="14.4" fill="#3f4a8a"/>
<circle cx="1066.0" cy="302.0" r="18.4" fill="#3f4a8a"/>
<circle cx="1085.0" cy="287.0" r="18.4" fill="#3f4a8a"/>
<circle cx="998.0" cy="325.0" r="16.4" fill="#3f4a8a"/>
<circle cx="1097.0" cy="327.0" r="18.4" fill="#3f4a8a"/>
<circle cx="1124.0" cy="335.0" r="16.4" fill="#3f4a8a"/>
<circle cx="986.0" cy="218.0" r="13.4" fill="#3f4a8a"/>
<circle cx="1085.0" cy="348.0" r="14.4" fill="#3f4a8a"/>
<circle cx="1044.0" cy="258.0" r="19.4" fill="#3f4a8a"/>
<circle cx="1056.0" cy="341.0" r="18.4" fill="#3f4a8a"/>
<circle cx="1108.0" cy="368.0" r="18.4" fill="#3f4a8a"/>
<circle cx="1044.0" cy="379.0" r="20.4" fill="#3f4a8a"/>
<circle cx="734.0" cy="377.0" r="18.4" fill="#3f4a8a"/>
<circle cx="740.0" cy="411.0" r="18.4" fill="#3f4a8a"/>
<circle cx="672.0" cy="439.0" r="18.4" fill="#3f4a8a"/>
<circle cx="638.0" cy="452.0" r="18.4" fill="#3f4a8a"/>
<circle cx="693.0" cy="461.0" r="18.4" fill="#3f4a8a"/>
<circle cx="683.0" cy="491.0" r="16.4" fill="#3f4a8a"/>
<circle cx="732.0" cy="461.0" r="14.4" fill="#3f4a8a"/>
<circle cx="736.0" cy="486.0" r="14.4" fill="#3f4a8a"/>
<circle cx="806.0" cy="363.0" r="16.4" fill="#3f4a8a"/>
<circle cx="923.0" cy="398.0" r="16.4" fill="#3f4a8a"/>
<circle cx="829.0" cy="441.0" r="18.4" fill="#3f4a8a"/>
<circle cx="863.0" cy="446.0" r="16.4" fill="#3f4a8a"/>
<circle cx="928.0" cy="463.0" r="16.4" fill="#3f4a8a"/>
<circle cx="955.0" cy="482.0" r="18.4" fill="#3f4a8a"/>
<circle cx="819.0" cy="395.0" r="20.4" fill="#3f4a8a"/>
<circle cx="889.0" cy="401.0" r="20.4" fill="#3f4a8a"/>
<circle cx="951.0" cy="428.0" r="21.4" fill="#3f4a8a"/>
<circle cx="1006.0" cy="379.0" r="20.4" fill="#3f4a8a"/>
<circle cx="976.0" cy="379.0" r="16.4" fill="#3f4a8a"/>
<circle cx="991.0" cy="413.0" r="18.4" fill="#3f4a8a"/>
<circle cx="988.0" cy="443.0" r="20.4" fill="#3f4a8a"/>
<circle cx="999.0" cy="476.0" r="18.4" fill="#3f4a8a"/>
<circle cx="988.0" cy="503.0" r="14.4" fill="#3f4a8a"/>
<circle cx="656.0" cy="81.0" r="13.4" fill="#453380"/>
<circle cx="683.0" cy="98.0" r="16.4" fill="#453380"/>
<circle cx="708.0" cy="89.0" r="13.4" fill="#453380"/>
<circle cx="710.0" cy="139.0" r="20.4" fill="#453380"/>
<circle cx="757.0" cy="96.0" r="16.4" fill="#453380"/>
<circle cx="793.0" cy="87.0" r="15.4" fill="#453380"/>
<circle cx="693.0" cy="170.0" r="21.4" fill="#453380"/>
<circle cx="637.0" cy="174.0" r="18.4" fill="#453380"/>
<circle cx="786.0" cy="164.0" r="20.4" fill="#453380"/>
<circle cx="670.0" cy="199.0" r="19.4" fill="#453380"/>
<circle cx="759.0" cy="135.0" r="20.4" fill="#453380"/>
<circle cx="948.0" cy="81.0" r="13.4" fill="#453380"/>
<circle cx="925.0" cy="158.0" r="18.4" fill="#453380"/>
<circle cx="960.0" cy="127.0" r="13.4" fill="#453380"/>
<circle cx="805.0" cy="168.0" r="13.4" fill="#453380"/>
<circle cx="808.0" cy="113.0" r="21.4" fill="#453380"/>
<circle cx="860.0" cy="111.0" r="20.4" fill="#453380"/>
<circle cx="986.0" cy="85.0" r="18.4" fill="#453380"/>
<circle cx="979.0" cy="129.0" r="20.4" fill="#453380"/>
<circle cx="973.0" cy="183.0" r="18.4" fill="#453380"/>
<circle cx="1033.0" cy="203.0" r="20.4" fill="#453380"/>
<circle cx="686.0" cy="237.0" r="20.4" fill="#453380"/>
<circle cx="719.0" cy="233.0" r="16.4" fill="#453380"/>
<circle cx="637.0" cy="260.0" r="18.4" fill="#453380"/>
<circle cx="671.0" cy="268.0" r="16.4" fill="#453380"/>
<circle cx="635.0" cy="287.0" r="18.4" fill="#453380"/>
<circle cx="709.0" cy="302.0" r="22.4" fill="#453380"/>
<circle cx="660.0" cy="308.0" r="18.4" fill="#453380"/>
<circle cx="677.0" cy="348.0" r="20.4" fill="#453380"/>
<circle cx="753.0" cy="352.0" r="16.4" fill="#453380"/>
<circle cx="795.0" cy="228.0" r="13.4" fill="#453380"/>
<circle cx="738.0" cy="260.0" r="19.4" fill="#453380"/>
<circle cx="715.0" cy="347.0" r="18.4" fill="#453380"/>
<circle cx="794.0" cy="320.0" r="19.4" fill="#453380"/>
<circle cx="809.0" cy="235.0" r="20.4" fill="#453380"/>
<circle cx="866.0" cy="245.0" r="22.4" fill="#453380"/>
<circle cx="856.0" cy="224.0" r="14.4" fill="#453380"/>
<circle cx="923.0" cy="245.0" r="20.4" fill="#453380"/>
<circle cx="803.0" cy="273.0" r="14.4" fill="#453380"/>
<circle cx="841.0" cy="298.0" r="16.4" fill="#453380"/>
<circle cx="872.0" cy="350.0" r="20.4" fill="#453380"/>
<circle cx="950.0" cy="281.0" r="20.4" fill="#453380"/>
<circle cx="935.0" cy="336.0" r="20.4" fill="#453380"/>
<circle cx="988.0" cy="296.0" r="18.4" fill="#453380"/>
<circle cx="1131.0" cy="291.0" r="14.4" fill="#453380"/>
<circle cx="971.0" cy="281.0" r="14.4" fill="#453380"/>
<circle cx="1030.0" cy="220.0" r="11.4" fill="#453380"/>
<circle cx="633.0" cy="383.0" r="18.4" fill="#453380"/>
<circle cx="678.0" cy="371.0" r="18.4" fill="#453380"/>
<circle cx="702.0" cy="390.0" r="16.4" fill="#453380"/>
<circle cx="758.0" cy="373.0" r="20.4" fill="#453380"/>
<circle cx="710.0" cy="424.0" r="22.4" fill="#453380"/>
<circle cx="663.0" cy="465.0" r="18.4" fill="#453380"/>
<circle cx="633.0" cy="478.0" r="16.4" fill="#453380"/>
<circle cx="715.0" cy="499.0" r="18.4" fill="#453380"/>
<circle cx="758.0" cy="452.0" r="20.4" fill="#453380"/>
<circle cx="758.0" cy="495.0" r="18.4" fill="#453380"/>
<circle cx="784.0" cy="421.0" r="21.4" fill="#453380"/>
<circle cx="853.0" cy="418.0" r="22.4" fill="#453380"/>
<circle cx="870.0" cy="366.0" r="16.4" fill="#453380"/>
<circle cx="810.0" cy="469.0" r="20.4" fill="#453380"/>
<circle cx="848.0" cy="491.0" r="22.4" fill="#453380"/>
<circle cx="932.0" cy="501.0" r="18.4" fill="#453380"/>
<circle cx="820.0" cy="499.0" r="14.4" fill="#453380"/>
<circle cx="1078.0" cy="386.0" r="16.4" fill="#453380"/>
<circle cx="1074.0" cy="454.0" r="20.4" fill="#453380"/>
<circle cx="1113.0" cy="454.0" r="18.4" fill="#453380"/>
<circle cx="1078.0" cy="491.0" r="20.4" fill="#453380"/>
<circle cx="1121.0" cy="482.0" r="18.4" fill="#453380"/>
<circle cx="971.0" cy="482.0" r="14.4" fill="#453380"/>
<circle cx="1047.0" cy="425.0" r="21.4" fill="#453380"/>
<path d="M1036,75 L1137,75 L1137,158 L1091,156 L1048,104 L1036,92 Z" fill="#46216e"/>
<circle cx="1108" cy="132" r="26" fill="#440a5e"/><circle cx="1126" cy="105" r="20" fill="#440a5e"/><circle cx="1088" cy="92" r="14" fill="#45166a"/>
<rect x="1080" y="247" width="57" height="34" rx="14" fill="#440154"/>
<path d="M1137,392 L1095,412 L1059,432 L1035,458 L1014,512 L1137,512 Z" fill="#472a78"/>
<circle cx="635.0" cy="102.0" r="20.4" fill="#47176b"/>
<circle cx="658.0" cy="135.0" r="20.4" fill="#47176b"/>
<circle cx="807.0" cy="79.0" r="15.4" fill="#47176b"/>
<circle cx="886.0" cy="179.0" r="20.4" fill="#47176b"/>
<circle cx="635.0" cy="327.0" r="20.4" fill="#47176b"/>
<circle cx="635.0" cy="413.0" r="18.4" fill="#47176b"/>
<circle cx="650.0" cy="499.0" r="16.4" fill="#47176b"/>
<circle cx="785.0" cy="480.0" r="18.4" fill="#47176b"/>
<circle cx="913.0" cy="439.0" r="18.4" fill="#47176b"/>
<circle cx="889.0" cy="495.0" r="16.4" fill="#47176b"/>
<circle cx="1117.0" cy="405.0" r="24.4" fill="#47176b"/>
<circle cx="1038.0" cy="486.0" r="22.4" fill="#47176b"/>
<circle cx="1130.0" cy="410.0" r="21.4" fill="#47176b"/>
<circle cx="634" cy="80" r="13" fill="#47176b"/>
</g></g>
<circle cx="730.5" cy="106.5" r="17" fill="rgba(255,255,255,0.11)" stroke="#ffff00" stroke-width="2"/>
<path d="M713.5,106.5H747.5M730.5,89.5V123.5" stroke="#ffff00" stroke-width="2"/>
<rect x="711.5" y="104.5" width="4" height="4" fill="#ffff00"/>
<rect x="745.5" y="104.5" width="4" height="4" fill="#ffff00"/>
<rect x="728.5" y="87.5" width="4" height="4" fill="#ffff00"/>
<rect x="728.5" y="121.5" width="4" height="4" fill="#ffff00"/>
<circle cx="760" cy="135" r="20.5" fill="rgba(255,255,255,0.11)" stroke="#ffff00" stroke-width="2"/>
<path d="M739.5,135H780.5M760,114.5V155.5" stroke="#ffff00" stroke-width="2"/>
<rect x="737.5" y="133" width="4" height="4" fill="#ffff00"/>
<rect x="778.5" y="133" width="4" height="4" fill="#ffff00"/>
<rect x="758" y="112.5" width="4" height="4" fill="#ffff00"/>
<rect x="758" y="153.5" width="4" height="4" fill="#ffff00"/>
<circle cx="808" cy="113.5" r="21" fill="rgba(255,255,255,0.11)" stroke="#ffff00" stroke-width="2"/>
<path d="M787,113.5H829M808,92.5V134.5" stroke="#ffff00" stroke-width="2"/>
<rect x="785" y="111.5" width="4" height="4" fill="#ffff00"/>
<rect x="827" y="111.5" width="4" height="4" fill="#ffff00"/>
<rect x="806" y="90.5" width="4" height="4" fill="#ffff00"/>
<rect x="806" y="132.5" width="4" height="4" fill="#ffff00"/>
<circle cx="860" cy="111" r="20" fill="rgba(255,255,255,0.11)" stroke="#ffff00" stroke-width="2"/>
<path d="M840,111H880M860,91V131" stroke="#ffff00" stroke-width="2"/>
<rect x="838" y="109" width="4" height="4" fill="#ffff00"/>
<rect x="878" y="109" width="4" height="4" fill="#ffff00"/>
<rect x="858" y="89" width="4" height="4" fill="#ffff00"/>
<rect x="858" y="129" width="4" height="4" fill="#ffff00"/>
<circle cx="1030.6" cy="101.8" r="18.8" fill="rgba(255,255,255,0.11)" stroke="#ffff00" stroke-width="2"/>
<path d="M1011.8,101.8H1049.3999999999999M1030.6,83.0V120.6" stroke="#ffff00" stroke-width="2"/>
<rect x="1009.8" y="99.8" width="4" height="4" fill="#ffff00"/>
<rect x="1047.3999999999999" y="99.8" width="4" height="4" fill="#ffff00"/>
<rect x="1028.6" y="81.0" width="4" height="4" fill="#ffff00"/>
<rect x="1028.6" y="118.6" width="4" height="4" fill="#ffff00"/>
<circle cx="735.6" cy="165" r="17" fill="rgba(255,255,255,0.11)" stroke="#ffff00" stroke-width="2"/>
<path d="M718.6,165H752.6M735.6,148V182" stroke="#ffff00" stroke-width="2"/>
<rect x="716.6" y="163" width="4" height="4" fill="#ffff00"/>
<rect x="750.6" y="163" width="4" height="4" fill="#ffff00"/>
<rect x="733.6" y="146" width="4" height="4" fill="#ffff00"/>
<rect x="733.6" y="180" width="4" height="4" fill="#ffff00"/>
<circle cx="667.5" cy="200.5" r="20" fill="rgba(255,255,255,0.11)" stroke="#ffff00" stroke-width="2"/>
<path d="M647.5,200.5H687.5M667.5,180.5V220.5" stroke="#ffff00" stroke-width="2"/>
<rect x="645.5" y="198.5" width="4" height="4" fill="#ffff00"/>
<rect x="685.5" y="198.5" width="4" height="4" fill="#ffff00"/>
<rect x="665.5" y="178.5" width="4" height="4" fill="#ffff00"/>
<rect x="665.5" y="218.5" width="4" height="4" fill="#ffff00"/>
<circle cx="738.6" cy="207" r="18.5" fill="rgba(255,255,255,0.11)" stroke="#ffff00" stroke-width="2"/>
<path d="M720.1,207H757.1M738.6,188.5V225.5" stroke="#ffff00" stroke-width="2"/>
<rect x="718.1" y="205" width="4" height="4" fill="#ffff00"/>
<rect x="755.1" y="205" width="4" height="4" fill="#ffff00"/>
<rect x="736.6" y="186.5" width="4" height="4" fill="#ffff00"/>
<rect x="736.6" y="223.5" width="4" height="4" fill="#ffff00"/>
<circle cx="885.4" cy="180" r="19" fill="rgba(255,255,255,0.02)" stroke="#ffff00" stroke-width="2"/>
<path d="M866.4,180H904.4M885.4,161V199" stroke="#ffff00" stroke-width="2"/>
<rect x="864.4" y="178" width="4" height="4" fill="#ffff00"/>
<rect x="902.4" y="178" width="4" height="4" fill="#ffff00"/>
<rect x="883.4" y="159" width="4" height="4" fill="#ffff00"/>
<rect x="883.4" y="197" width="4" height="4" fill="#ffff00"/>
<circle cx="902" cy="215.5" r="19.5" fill="rgba(255,255,255,0.11)" stroke="#ffff00" stroke-width="2"/>
<path d="M882.5,215.5H921.5M902,196.0V235.0" stroke="#ffff00" stroke-width="2"/>
<rect x="880.5" y="213.5" width="4" height="4" fill="#ffff00"/>
<rect x="919.5" y="213.5" width="4" height="4" fill="#ffff00"/>
<rect x="900" y="194.0" width="4" height="4" fill="#ffff00"/>
<rect x="900" y="233.0" width="4" height="4" fill="#ffff00"/>
<circle cx="1062" cy="158.7" r="18.5" fill="rgba(255,255,255,0.11)" stroke="#ffff00" stroke-width="2"/>
<path d="M1043.5,158.7H1080.5M1062,140.2V177.2" stroke="#ffff00" stroke-width="2"/>
<rect x="1041.5" y="156.7" width="4" height="4" fill="#ffff00"/>
<rect x="1078.5" y="156.7" width="4" height="4" fill="#ffff00"/>
<rect x="1060" y="138.2" width="4" height="4" fill="#ffff00"/>
<rect x="1060" y="175.2" width="4" height="4" fill="#ffff00"/>
<circle cx="1102" cy="172.8" r="18.8" fill="rgba(255,255,255,0.11)" stroke="#ffff00" stroke-width="2"/>
<path d="M1083.2,172.8H1120.8M1102,154.0V191.60000000000002" stroke="#ffff00" stroke-width="2"/>
<rect x="1081.2" y="170.8" width="4" height="4" fill="#ffff00"/>
<rect x="1118.8" y="170.8" width="4" height="4" fill="#ffff00"/>
<rect x="1100" y="152.0" width="4" height="4" fill="#ffff00"/>
<rect x="1100" y="189.60000000000002" width="4" height="4" fill="#ffff00"/>
<circle cx="1003" cy="181.7" r="19.5" fill="rgba(255,255,255,0.11)" stroke="#ffff00" stroke-width="2"/>
<path d="M983.5,181.7H1022.5M1003,162.2V201.2" stroke="#ffff00" stroke-width="2"/>
<rect x="981.5" y="179.7" width="4" height="4" fill="#ffff00"/>
<rect x="1020.5" y="179.7" width="4" height="4" fill="#ffff00"/>
<rect x="1001" y="160.2" width="4" height="4" fill="#ffff00"/>
<rect x="1001" y="199.2" width="4" height="4" fill="#ffff00"/>
<circle cx="1110.8" cy="212" r="19.5" fill="rgba(255,255,255,0.11)" stroke="#ffff00" stroke-width="2"/>
<path d="M1091.3,212H1130.3M1110.8,192.5V231.5" stroke="#ffff00" stroke-width="2"/>
<rect x="1089.3" y="210" width="4" height="4" fill="#ffff00"/>
<rect x="1128.3" y="210" width="4" height="4" fill="#ffff00"/>
<rect x="1108.8" y="190.5" width="4" height="4" fill="#ffff00"/>
<rect x="1108.8" y="229.5" width="4" height="4" fill="#ffff00"/>
<circle cx="975.8" cy="245.8" r="21" fill="rgba(255,255,255,0.11)" stroke="#ffff00" stroke-width="2"/>
<path d="M954.8,245.8H996.8M975.8,224.8V266.8" stroke="#ffff00" stroke-width="2"/>
<rect x="952.8" y="243.8" width="4" height="4" fill="#ffff00"/>
<rect x="994.8" y="243.8" width="4" height="4" fill="#ffff00"/>
<rect x="973.8" y="222.8" width="4" height="4" fill="#ffff00"/>
<rect x="973.8" y="264.8" width="4" height="4" fill="#ffff00"/>
<circle cx="738" cy="259.6" r="19" fill="rgba(255,255,255,0.11)" stroke="#ffff00" stroke-width="2"/>
<path d="M719,259.6H757M738,240.60000000000002V278.6" stroke="#ffff00" stroke-width="2"/>
<rect x="717" y="257.6" width="4" height="4" fill="#ffff00"/>
<rect x="755" y="257.6" width="4" height="4" fill="#ffff00"/>
<rect x="736" y="238.60000000000002" width="4" height="4" fill="#ffff00"/>
<rect x="736" y="276.6" width="4" height="4" fill="#ffff00"/>
<circle cx="835.8" cy="265.8" r="16" fill="rgba(255,255,255,0.11)" stroke="#ffff00" stroke-width="2"/>
<path d="M819.8,265.8H851.8M835.8,249.8V281.8" stroke="#ffff00" stroke-width="2"/>
<rect x="817.8" y="263.8" width="4" height="4" fill="#ffff00"/>
<rect x="849.8" y="263.8" width="4" height="4" fill="#ffff00"/>
<rect x="833.8" y="247.8" width="4" height="4" fill="#ffff00"/>
<rect x="833.8" y="279.8" width="4" height="4" fill="#ffff00"/>
<circle cx="885" cy="285.8" r="18" fill="rgba(255,255,255,0.11)" stroke="#ffff00" stroke-width="2"/>
<path d="M867,285.8H903M885,267.8V303.8" stroke="#ffff00" stroke-width="2"/>
<rect x="865" y="283.8" width="4" height="4" fill="#ffff00"/>
<rect x="901" y="283.8" width="4" height="4" fill="#ffff00"/>
<rect x="883" y="265.8" width="4" height="4" fill="#ffff00"/>
<rect x="883" y="301.8" width="4" height="4" fill="#ffff00"/>
<circle cx="1044.1" cy="257.9" r="18.5" fill="rgba(255,255,255,0.11)" stroke="#ffff00" stroke-width="2"/>
<path d="M1025.6,257.9H1062.6M1044.1,239.39999999999998V276.4" stroke="#ffff00" stroke-width="2"/>
<rect x="1023.5999999999999" y="255.89999999999998" width="4" height="4" fill="#ffff00"/>
<rect x="1060.6" y="255.89999999999998" width="4" height="4" fill="#ffff00"/>
<rect x="1042.1" y="237.39999999999998" width="4" height="4" fill="#ffff00"/>
<rect x="1042.1" y="274.4" width="4" height="4" fill="#ffff00"/>
<circle cx="906.1" cy="314.6" r="18.7" fill="rgba(255,255,255,0.11)" stroke="#ffff00" stroke-width="2"/>
<path d="M887.4,314.6H924.8000000000001M906.1,295.90000000000003V333.3" stroke="#ffff00" stroke-width="2"/>
<rect x="885.4" y="312.6" width="4" height="4" fill="#ffff00"/>
<rect x="922.8000000000001" y="312.6" width="4" height="4" fill="#ffff00"/>
<rect x="904.1" y="293.90000000000003" width="4" height="4" fill="#ffff00"/>
<rect x="904.1" y="331.3" width="4" height="4" fill="#ffff00"/>
<circle cx="793.5" cy="319.6" r="19.2" fill="rgba(255,255,255,0.11)" stroke="#ffff00" stroke-width="2"/>
<path d="M774.3,319.6H812.7M793.5,300.40000000000003V338.8" stroke="#ffff00" stroke-width="2"/>
<rect x="772.3" y="317.6" width="4" height="4" fill="#ffff00"/>
<rect x="810.7" y="317.6" width="4" height="4" fill="#ffff00"/>
<rect x="791.5" y="298.40000000000003" width="4" height="4" fill="#ffff00"/>
<rect x="791.5" y="336.8" width="4" height="4" fill="#ffff00"/>
<circle cx="714.9" cy="346.8" r="17.8" fill="rgba(255,255,255,0.11)" stroke="#ffff00" stroke-width="2"/>
<path d="M697.1,346.8H732.6999999999999M714.9,329.0V364.6" stroke="#ffff00" stroke-width="2"/>
<rect x="695.1" y="344.8" width="4" height="4" fill="#ffff00"/>
<rect x="730.6999999999999" y="344.8" width="4" height="4" fill="#ffff00"/>
<rect x="712.9" y="327.0" width="4" height="4" fill="#ffff00"/>
<rect x="712.9" y="362.6" width="4" height="4" fill="#ffff00"/>
<circle cx="806" cy="362.6" r="15.2" fill="rgba(255,255,255,0.11)" stroke="#ffff00" stroke-width="2"/>
<path d="M790.8,362.6H821.2M806,347.40000000000003V377.8" stroke="#ffff00" stroke-width="2"/>
<rect x="788.8" y="360.6" width="4" height="4" fill="#ffff00"/>
<rect x="819.2" y="360.6" width="4" height="4" fill="#ffff00"/>
<rect x="804" y="345.40000000000003" width="4" height="4" fill="#ffff00"/>
<rect x="804" y="375.8" width="4" height="4" fill="#ffff00"/>
<circle cx="849" cy="380.7" r="15.2" fill="rgba(255,255,255,0.11)" stroke="#ffff00" stroke-width="2"/>
<path d="M833.8,380.7H864.2M849,365.5V395.9" stroke="#ffff00" stroke-width="2"/>
<rect x="831.8" y="378.7" width="4" height="4" fill="#ffff00"/>
<rect x="862.2" y="378.7" width="4" height="4" fill="#ffff00"/>
<rect x="847" y="363.5" width="4" height="4" fill="#ffff00"/>
<rect x="847" y="393.9" width="4" height="4" fill="#ffff00"/>
<circle cx="916" cy="369.5" r="17" fill="rgba(255,255,255,0.11)" stroke="#ffff00" stroke-width="2"/>
<path d="M899,369.5H933M916,352.5V386.5" stroke="#ffff00" stroke-width="2"/>
<rect x="897" y="367.5" width="4" height="4" fill="#ffff00"/>
<rect x="931" y="367.5" width="4" height="4" fill="#ffff00"/>
<rect x="914" y="350.5" width="4" height="4" fill="#ffff00"/>
<rect x="914" y="384.5" width="4" height="4" fill="#ffff00"/>
<circle cx="1055.9" cy="341" r="17.5" fill="rgba(255,255,255,0.11)" stroke="#ffff00" stroke-width="2"/>
<path d="M1038.4,341H1073.4M1055.9,323.5V358.5" stroke="#ffff00" stroke-width="2"/>
<rect x="1036.4" y="339" width="4" height="4" fill="#ffff00"/>
<rect x="1071.4" y="339" width="4" height="4" fill="#ffff00"/>
<rect x="1053.9" y="321.5" width="4" height="4" fill="#ffff00"/>
<rect x="1053.9" y="356.5" width="4" height="4" fill="#ffff00"/>
<circle cx="1107.8" cy="367.9" r="18.2" fill="rgba(255,255,255,0.11)" stroke="#ffff00" stroke-width="2"/>
<path d="M1089.6,367.9H1126.0M1107.8,349.7V386.09999999999997" stroke="#ffff00" stroke-width="2"/>
<rect x="1087.6" y="365.9" width="4" height="4" fill="#ffff00"/>
<rect x="1124.0" y="365.9" width="4" height="4" fill="#ffff00"/>
<rect x="1105.8" y="347.7" width="4" height="4" fill="#ffff00"/>
<rect x="1105.8" y="384.09999999999997" width="4" height="4" fill="#ffff00"/>
<circle cx="1044.4" cy="379.4" r="20.5" fill="rgba(255,255,255,0.11)" stroke="#ffff00" stroke-width="2"/>
<path d="M1023.9000000000001,379.4H1064.9M1044.4,358.9V399.9" stroke="#ffff00" stroke-width="2"/>
<rect x="1021.9000000000001" y="377.4" width="4" height="4" fill="#ffff00"/>
<rect x="1062.9" y="377.4" width="4" height="4" fill="#ffff00"/>
<rect x="1042.4" y="356.9" width="4" height="4" fill="#ffff00"/>
<rect x="1042.4" y="397.9" width="4" height="4" fill="#ffff00"/>
<circle cx="818.8" cy="395.1" r="19.5" fill="rgba(255,255,255,0.11)" stroke="#ffff00" stroke-width="2"/>
<path d="M799.3,395.1H838.3M818.8,375.6V414.6" stroke="#ffff00" stroke-width="2"/>
<rect x="797.3" y="393.1" width="4" height="4" fill="#ffff00"/>
<rect x="836.3" y="393.1" width="4" height="4" fill="#ffff00"/>
<rect x="816.8" y="373.6" width="4" height="4" fill="#ffff00"/>
<rect x="816.8" y="412.6" width="4" height="4" fill="#ffff00"/>
<circle cx="889" cy="400.7" r="19.2" fill="rgba(255,255,255,0.11)" stroke="#ffff00" stroke-width="2"/>
<path d="M869.8,400.7H908.2M889,381.5V419.9" stroke="#ffff00" stroke-width="2"/>
<rect x="867.8" y="398.7" width="4" height="4" fill="#ffff00"/>
<rect x="906.2" y="398.7" width="4" height="4" fill="#ffff00"/>
<rect x="887" y="379.5" width="4" height="4" fill="#ffff00"/>
<rect x="887" y="417.9" width="4" height="4" fill="#ffff00"/>
<circle cx="783.6" cy="420.4" r="21.2" fill="rgba(255,255,255,0.11)" stroke="#ffff00" stroke-width="2"/>
<path d="M762.4,420.4H804.8000000000001M783.6,399.2V441.59999999999997" stroke="#ffff00" stroke-width="2"/>
<rect x="760.4" y="418.4" width="4" height="4" fill="#ffff00"/>
<rect x="802.8000000000001" y="418.4" width="4" height="4" fill="#ffff00"/>
<rect x="781.6" y="397.2" width="4" height="4" fill="#ffff00"/>
<rect x="781.6" y="439.59999999999997" width="4" height="4" fill="#ffff00"/>
<circle cx="951.1" cy="428" r="21.3" fill="rgba(255,255,255,0.11)" stroke="#ffff00" stroke-width="2"/>
<path d="M929.8000000000001,428H972.4M951.1,406.7V449.3" stroke="#ffff00" stroke-width="2"/>
<rect x="927.8000000000001" y="426" width="4" height="4" fill="#ffff00"/>
<rect x="970.4" y="426" width="4" height="4" fill="#ffff00"/>
<rect x="949.1" y="404.7" width="4" height="4" fill="#ffff00"/>
<rect x="949.1" y="447.3" width="4" height="4" fill="#ffff00"/>
<circle cx="1047.1" cy="424.7" r="20.5" fill="rgba(255,255,255,0.11)" stroke="#ffff00" stroke-width="2"/>
<path d="M1026.6,424.7H1067.6M1047.1,404.2V445.2" stroke="#ffff00" stroke-width="2"/>
<rect x="1024.6" y="422.7" width="4" height="4" fill="#ffff00"/>
<rect x="1065.6" y="422.7" width="4" height="4" fill="#ffff00"/>
<rect x="1045.1" y="402.2" width="4" height="4" fill="#ffff00"/>
<rect x="1045.1" y="443.2" width="4" height="4" fill="#ffff00"/>
<path d="M622.5,70V516.5" stroke="#000" stroke-width="1"/>
<path d="M618,71.5H622" stroke="#000" stroke-width="1.2"/>
<path d="M618,82.5H622" stroke="#000" stroke-width="1.2"/>
<path d="M618,93.5H622" stroke="#000" stroke-width="1.2"/>
<path d="M618,105.5H622" stroke="#000" stroke-width="1.2"/>
<path d="M614,116.5H622" stroke="#000" stroke-width="1.2"/>
<text x="609" y="121.1" font-size="10" text-anchor="end" font-family="Liberation Sans" stroke="#000" stroke-width="0.25">100</text>
<path d="M618,127.5H622" stroke="#000" stroke-width="1.2"/>
<path d="M618,139.5H622" stroke="#000" stroke-width="1.2"/>
<path d="M618,150.5H622" stroke="#000" stroke-width="1.2"/>
<path d="M618,161.5H622" stroke="#000" stroke-width="1.2"/>
<path d="M614,173.5H622" stroke="#000" stroke-width="1.2"/>
<text x="609" y="177.8" font-size="10" text-anchor="end" font-family="Liberation Sans" stroke="#000" stroke-width="0.25">150</text>
<path d="M618,184.5H622" stroke="#000" stroke-width="1.2"/>
<path d="M618,195.5H622" stroke="#000" stroke-width="1.2"/>
<path d="M618,207.5H622" stroke="#000" stroke-width="1.2"/>
<path d="M618,218.5H622" stroke="#000" stroke-width="1.2"/>
<path d="M614,229.5H622" stroke="#000" stroke-width="1.2"/>
<text x="609" y="234.5" font-size="10" text-anchor="end" font-family="Liberation Sans" stroke="#000" stroke-width="0.25">200</text>
<path d="M618,241.5H622" stroke="#000" stroke-width="1.2"/>
<path d="M618,252.5H622" stroke="#000" stroke-width="1.2"/>
<path d="M618,263.5H622" stroke="#000" stroke-width="1.2"/>
<path d="M618,275.5H622" stroke="#000" stroke-width="1.2"/>
<path d="M614,286.5H622" stroke="#000" stroke-width="1.2"/>
<text x="609" y="291.2" font-size="10" text-anchor="end" font-family="Liberation Sans" stroke="#000" stroke-width="0.25">250</text>
<path d="M618,297.5H622" stroke="#000" stroke-width="1.2"/>
<path d="M618,309.5H622" stroke="#000" stroke-width="1.2"/>
<path d="M618,320.5H622" stroke="#000" stroke-width="1.2"/>
<path d="M618,332.5H622" stroke="#000" stroke-width="1.2"/>
<path d="M614,343.5H622" stroke="#000" stroke-width="1.2"/>
<text x="609" y="348.0" font-size="10" text-anchor="end" font-family="Liberation Sans" stroke="#000" stroke-width="0.25">300</text>
<path d="M618,354.5H622" stroke="#000" stroke-width="1.2"/>
<path d="M618,366.5H622" stroke="#000" stroke-width="1.2"/>
<path d="M618,377.5H622" stroke="#000" stroke-width="1.2"/>
<path d="M618,388.5H622" stroke="#000" stroke-width="1.2"/>
<path d="M614,400.5H622" stroke="#000" stroke-width="1.2"/>
<text x="609" y="404.7" font-size="10" text-anchor="end" font-family="Liberation Sans" stroke="#000" stroke-width="0.25">350</text>
<path d="M618,411.5H622" stroke="#000" stroke-width="1.2"/>
<path d="M618,422.5H622" stroke="#000" stroke-width="1.2"/>
<path d="M618,434.5H622" stroke="#000" stroke-width="1.2"/>
<path d="M618,445.5H622" stroke="#000" stroke-width="1.2"/>
<path d="M614,456.5H622" stroke="#000" stroke-width="1.2"/>
<text x="609" y="461.4" font-size="10" text-anchor="end" font-family="Liberation Sans" stroke="#000" stroke-width="0.25">400</text>
<path d="M618,468.5H622" stroke="#000" stroke-width="1.2"/>
<path d="M618,479.5H622" stroke="#000" stroke-width="1.2"/>
<path d="M618,490.5H622" stroke="#000" stroke-width="1.2"/>
<path d="M618,502.5H622" stroke="#000" stroke-width="1.2"/>
<path d="M614,513.5H622" stroke="#000" stroke-width="1.2"/>
<text x="609" y="518.1" font-size="10" text-anchor="end" font-family="Liberation Sans" stroke="#000" stroke-width="0.25">450</text>
<path d="M622,516.5H1142" stroke="#000" stroke-width="1"/>
<path d="M637.5,517V521" stroke="#000" stroke-width="1.2"/>
<path d="M660.5,517V521" stroke="#000" stroke-width="1.2"/>
<path d="M682.5,517V521" stroke="#000" stroke-width="1.2"/>
<path d="M705.5,517V525" stroke="#000" stroke-width="1.2"/>
<text x="708.0" y="537.5" font-size="10" text-anchor="middle" font-family="Liberation Sans" stroke="#000" stroke-width="0.25">100</text>
<path d="M728.5,517V521" stroke="#000" stroke-width="1.2"/>
<path d="M750.5,517V521" stroke="#000" stroke-width="1.2"/>
<path d="M773.5,517V521" stroke="#000" stroke-width="1.2"/>
<path d="M796.5,517V521" stroke="#000" stroke-width="1.2"/>
<path d="M819.5,517V525" stroke="#000" stroke-width="1.2"/>
<text x="821.6" y="537.5" font-size="10" text-anchor="middle" font-family="Liberation Sans" stroke="#000" stroke-width="0.25">200</text>
<path d="M841.5,517V521" stroke="#000" stroke-width="1.2"/>
<path d="M864.5,517V521" stroke="#000" stroke-width="1.2"/>
<path d="M887.5,517V521" stroke="#000" stroke-width="1.2"/>
<path d="M910.5,517V521" stroke="#000" stroke-width="1.2"/>
<path d="M932.5,517V525" stroke="#000" stroke-width="1.2"/>
<text x="935.3" y="537.5" font-size="10" text-anchor="middle" font-family="Liberation Sans" stroke="#000" stroke-width="0.25">300</text>
<path d="M955.5,517V521" stroke="#000" stroke-width="1.2"/>
<path d="M978.5,517V521" stroke="#000" stroke-width="1.2"/>
<path d="M1000.5,517V521" stroke="#000" stroke-width="1.2"/>
<path d="M1023.5,517V521" stroke="#000" stroke-width="1.2"/>
<path d="M1046.5,517V525" stroke="#000" stroke-width="1.2"/>
<text x="1048.9" y="537.5" font-size="10" text-anchor="middle" font-family="Liberation Sans" stroke="#000" stroke-width="0.25">400</text>
<path d="M1069.5,517V521" stroke="#000" stroke-width="1.2"/>
<path d="M1091.5,517V521" stroke="#000" stroke-width="1.2"/>
<path d="M1114.5,517V521" stroke="#000" stroke-width="1.2"/>
<path d="M1137.5,517V521" stroke="#000" stroke-width="1.2"/>
<defs><linearGradient id="vir" x1="0" y1="1" x2="0" y2="0">
<stop offset="0.0" stop-color="#440154"/>
<stop offset="0.1" stop-color="#482475"/>
<stop offset="0.2" stop-color="#414487"/>
<stop offset="0.3" stop-color="#355f8d"/>
<stop offset="0.4" stop-color="#2a788e"/>
<stop offset="0.5" stop-color="#21918c"/>
<stop offset="0.6" stop-color="#22a884"/>
<stop offset="0.7" stop-color="#44bf70"/>
<stop offset="0.8" stop-color="#7ad151"/>
<stop offset="0.9" stop-color="#bddf26"/>
<stop offset="1.0" stop-color="#fde725"/>
</linearGradient></defs>
<rect x="1142" y="70" width="10.5" height="446" fill="url(#vir)"/>
<path d="M1152.5,70V516" stroke="#000" stroke-width="1"/>
<path d="M1153,511.5H1157" stroke="#000" stroke-width="1.2"/>
<path d="M1153,499.5H1157" stroke="#000" stroke-width="1.2"/>
<path d="M1153,487.5H1157" stroke="#000" stroke-width="1.2"/>
<path d="M1153,476.5H1157" stroke="#000" stroke-width="1.2"/>
<path d="M1153,464.5H1161" stroke="#000" stroke-width="1.2"/>
<text x="1168" y="468.5" font-size="10" font-family="Liberation Sans" stroke="#000" stroke-width="0.25">0.05</text>
<path d="M1153,452.5H1157" stroke="#000" stroke-width="1.2"/>
<path d="M1153,440.5H1157" stroke="#000" stroke-width="1.2"/>
<path d="M1153,428.5H1157" stroke="#000" stroke-width="1.2"/>
<path d="M1153,416.5H1157" stroke="#000" stroke-width="1.2"/>
<path d="M1153,404.5H1161" stroke="#000" stroke-width="1.2"/>
<text x="1168" y="408.9" font-size="10" font-family="Liberation Sans" stroke="#000" stroke-width="0.25">0.1</text>
<path d="M1153,392.5H1157" stroke="#000" stroke-width="1.2"/>
<path d="M1153,380.5H1157" stroke="#000" stroke-width="1.2"/>
<path d="M1153,368.5H1157" stroke="#000" stroke-width="1.2"/>
<path d="M1153,356.5H1157" stroke="#000" stroke-width="1.2"/>
<path d="M1153,344.5H1161" stroke="#000" stroke-width="1.2"/>
<text x="1168" y="349.3" font-size="10" font-family="Liberation Sans" stroke="#000" stroke-width="0.25">0.15</text>
<path d="M1153,332.5H1157" stroke="#000" stroke-width="1.2"/>
<path d="M1153,321.5H1157" stroke="#000" stroke-width="1.2"/>
<path d="M1153,309.5H1157" stroke="#000" stroke-width="1.2"/>
<path d="M1153,297.5H1157" stroke="#000" stroke-width="1.2"/>
<path d="M1153,285.5H1161" stroke="#000" stroke-width="1.2"/>
<text x="1168" y="289.7" font-size="10" font-family="Liberation Sans" stroke="#000" stroke-width="0.25">0.2</text>
<path d="M1153,273.5H1157" stroke="#000" stroke-width="1.2"/>
<path d="M1153,261.5H1157" stroke="#000" stroke-width="1.2"/>
<path d="M1153,249.5H1157" stroke="#000" stroke-width="1.2"/>
<path d="M1153,237.5H1157" stroke="#000" stroke-width="1.2"/>
<path d="M1153,225.5H1161" stroke="#000" stroke-width="1.2"/>
<text x="1168" y="230.1" font-size="10" font-family="Liberation Sans" stroke="#000" stroke-width="0.25">0.25</text>
<path d="M1153,213.5H1157" stroke="#000" stroke-width="1.2"/>
<path d="M1153,201.5H1157" stroke="#000" stroke-width="1.2"/>
<path d="M1153,189.5H1157" stroke="#000" stroke-width="1.2"/>
<path d="M1153,178.5H1157" stroke="#000" stroke-width="1.2"/>
<path d="M1153,166.5H1161" stroke="#000" stroke-width="1.2"/>
<text x="1168" y="170.5" font-size="10" font-family="Liberation Sans" stroke="#000" stroke-width="0.25">0.3</text>
<path d="M1153,154.5H1157" stroke="#000" stroke-width="1.2"/>
<path d="M1153,142.5H1157" stroke="#000" stroke-width="1.2"/>
<path d="M1153,130.5H1157" stroke="#000" stroke-width="1.2"/>
<path d="M1153,118.5H1157" stroke="#000" stroke-width="1.2"/>
<path d="M1153,106.5H1161" stroke="#000" stroke-width="1.2"/>
<text x="1168" y="110.9" font-size="10" font-family="Liberation Sans" stroke="#000" stroke-width="0.25">0.35</text>
<path d="M1153,94.5H1157" stroke="#000" stroke-width="1.2"/>
<path d="M1153,82.5H1157" stroke="#000" stroke-width="1.2"/>
<path d="M1153,70.5H1157" stroke="#000" stroke-width="1.2"/>
</svg>
<svg class="abs" style="left:0;top:0" width="1200" height="700">
<rect x="635.8" y="581" width="384.5" height="57.5" fill="#fde6e6"/>
<path d="M648.7,581V638" stroke="#c8c8c8" stroke-width="1" stroke-dasharray="1 2"/>
<path d="M669.4,581V638" stroke="#c8c8c8" stroke-width="1" stroke-dasharray="1 2"/>
<path d="M690.1,581V638" stroke="#c8c8c8" stroke-width="1" stroke-dasharray="1 2"/>
<path d="M710.8,581V638" stroke="#c8c8c8" stroke-width="1" stroke-dasharray="1 2"/>
<path d="M731.5,581V638" stroke="#808080" stroke-width="1" stroke-dasharray="1 2"/>
<path d="M752.2,581V638" stroke="#c8c8c8" stroke-width="1" stroke-dasharray="1 2"/>
<path d="M772.9,581V638" stroke="#c8c8c8" stroke-width="1" stroke-dasharray="1 2"/>
<path d="M793.6,581V638" stroke="#c8c8c8" stroke-width="1" stroke-dasharray="1 2"/>
<path d="M814.3,581V638" stroke="#c8c8c8" stroke-width="1" stroke-dasharray="1 2"/>
<path d="M835.0,581V638" stroke="#808080" stroke-width="1" stroke-dasharray="1 2"/>
<path d="M855.7,581V638" stroke="#c8c8c8" stroke-width="1" stroke-dasharray="1 2"/>
<path d="M876.4,581V638" stroke="#c8c8c8" stroke-width="1" stroke-dasharray="1 2"/>
<path d="M897.1,581V638" stroke="#c8c8c8" stroke-width="1" stroke-dasharray="1 2"/>
<path d="M917.8,581V638" stroke="#c8c8c8" stroke-width="1" stroke-dasharray="1 2"/>
<path d="M938.5,581V638" stroke="#808080" stroke-width="1" stroke-dasharray="1 2"/>
<path d="M959.2,581V638" stroke="#c8c8c8" stroke-width="1" stroke-dasharray="1 2"/>
<path d="M979.9,581V638" stroke="#c8c8c8" stroke-width="1" stroke-dasharray="1 2"/>
<path d="M1000.6,581V638" stroke="#c8c8c8" stroke-width="1" stroke-dasharray="1 2"/>
<path d="M1021.3,581V638" stroke="#c8c8c8" stroke-width="1" stroke-dasharray="1 2"/>
<path d="M1042.0,581V638" stroke="#808080" stroke-width="1" stroke-dasharray="1 2"/>
<path d="M1062.7,581V638" stroke="#c8c8c8" stroke-width="1" stroke-dasharray="1 2"/>
<path d="M1083.4,581V638" stroke="#c8c8c8" stroke-width="1" stroke-dasharray="1 2"/>
<path d="M1104.1,581V638" stroke="#c8c8c8" stroke-width="1" stroke-dasharray="1 2"/>
<path d="M1124.8,581V638" stroke="#c8c8c8" stroke-width="1" stroke-dasharray="1 2"/>
<path d="M1145.5,581V638" stroke="#808080" stroke-width="1" stroke-dasharray="1 2"/>
<path d="M1166.2,581V638" stroke="#c8c8c8" stroke-width="1" stroke-dasharray="1 2"/>
<path d="M634,623.1H1180" stroke="#808080" stroke-width="1" stroke-dasharray="1 2"/>
<path d="M634,607.8H1180" stroke="#808080" stroke-width="1" stroke-dasharray="1 2"/>
<path d="M634,592.5H1180" stroke="#808080" stroke-width="1" stroke-dasharray="1 2"/>
<path d="M635.8,638.5V630.0H637.8V631.9H639.9V627.9H642.0V633.2H644.0V630.2H646.1V632.1H648.2V634.4H650.3V631.5H652.3V634.1H654.4V631.2H656.5V633.4H658.5V633.0H660.6V627.4H662.7V616.6H664.7V625.4H666.8V620.9H668.9V606.9H671.0V591.1H673.0V600.1H675.1V603.7H677.2V581.0H679.2V613.7H681.3V581.0H683.4V603.3H685.4V608.0H687.5V608.1H689.6V599.2H691.7V581.0H693.7V604.5H695.8V585.5H697.9V582.5H699.9V595.9H702.0V587.3H704.1V608.9H706.1V609.0H708.2V603.4H710.3V581.0H712.4V594.1H714.4V600.3H716.5V588.9H718.6V596.2H720.6V603.8H722.7V584.3H724.8V591.5H726.8V611.1H728.9V601.8H731.0V606.0H733.1V595.6H735.1V601.7H737.2V615.8H739.3V596.0H741.3V621.1H743.4V614.7H745.5V606.5H747.5V622.2H749.6V615.5H751.7V625.3H753.8V612.6H755.8V610.7H757.9V615.5H760.0V608.8H762.0V621.5H764.1V613.7H766.2V616.3H768.2V616.9H770.3V619.8H772.4V612.0H774.5V610.1H776.5V620.3H778.6V616.9H780.7V627.5H782.7V616.8H784.8V618.1H786.9V611.2H788.9V614.8H791.0V624.7H793.1V623.1H795.2V618.1H797.2V628.5H799.3V622.0H801.4V626.8H803.4V627.5H805.5V628.3H807.6V616.7H809.6V627.5H811.7V625.9H813.8V623.7H815.9V615.2H817.9V628.3H820.0V622.9H822.1V621.3H824.1V615.4H826.2V617.3H828.3V617.6H830.3V627.3H832.4V626.2H834.5V627.5H836.6V620.8H838.6V619.9H840.7V630.3H842.8V630.2H844.8V629.7H846.9V629.8H849.0V627.1H851.0V626.0H853.1V629.8H855.2V632.1H857.3V628.4H859.3V629.1H861.4V627.1H863.5V622.7H865.5V626.0H867.6V628.2H869.7V627.4H871.7V627.0H873.8V632.8H875.9V625.3H878.0V626.9H880.0V626.2H882.1V627.3H884.2V631.2H886.2V631.4H888.3V633.6H890.4V630.0H892.4V634.1H894.5V634.3H896.6V633.7H898.7V634.1H900.7V633.2H902.8V634.8H904.9V635.1H906.9V634.6H909.0V635.0H911.1V633.8H913.1V635.5H915.2V631.4H917.3V633.1H919.4V635.4H921.4V635.1H923.5V634.9H925.6V634.9H927.6V635.9H929.7V633.3H931.8V633.0H933.8V635.2H935.9V635.4H938.0V636.6H940.1V636.7H942.1V636.2H944.2V636.5H946.3V635.1H948.3V636.9H950.4V637.2H952.5V635.3H954.5V636.4H956.6V637.2H958.7V636.6H960.8V637.5H962.8V636.9H964.9V636.3H967.0V636.6H969.0V637.0H971.1V637.6H973.2V637.6H975.2V637.8H977.3V637.3H979.4V637.6H981.5V637.4H983.5V637.8H985.6V638.0H987.7V637.6H989.7V637.6H991.8V637.7H993.9V637.8H995.9V638.0H998.0V638.2H1000.1V638.5H1002.2V638.5Z" fill="#1ee61e"/>
<path d="M633.5,581V639" stroke="#808080" stroke-width="1.5"/>
<path d="M633,638.5H1181" stroke="#808080" stroke-width="1.5"/>
<path d="M625,638.5H633" stroke="#808080" stroke-width="1"/>
<text x="619" y="641.8" font-size="9" text-anchor="end" fill="#333" font-family="Liberation Sans">0</text>
<path d="M625,623.1H633" stroke="#808080" stroke-width="1"/>
<text x="619" y="626.4" font-size="9" text-anchor="end" fill="#333" font-family="Liberation Sans">1000</text>
<path d="M625,607.8H633" stroke="#808080" stroke-width="1"/>
<text x="619" y="611.1" font-size="9" text-anchor="end" fill="#333" font-family="Liberation Sans">2000</text>
<path d="M625,592.5H633" stroke="#808080" stroke-width="1"/>
<text x="619" y="595.8" font-size="9" text-anchor="end" fill="#333" font-family="Liberation Sans">3000</text>
<path d="M648.7,639V643" stroke="#808080" stroke-width="1"/>
<path d="M669.4,639V643" stroke="#808080" stroke-width="1"/>
<path d="M690.1,639V643" stroke="#808080" stroke-width="1"/>
<path d="M710.8,639V643" stroke="#808080" stroke-width="1"/>
<path d="M731.5,639V647" stroke="#808080" stroke-width="1"/>
<text x="732.5" y="659.5" font-size="9" text-anchor="middle" fill="#333" font-family="Liberation Sans">0.1</text>
<path d="M752.2,639V643" stroke="#808080" stroke-width="1"/>
<path d="M772.9,639V643" stroke="#808080" stroke-width="1"/>
<path d="M793.6,639V643" stroke="#808080" stroke-width="1"/>
<path d="M814.3,639V643" stroke="#808080" stroke-width="1"/>
<path d="M835.0,639V647" stroke="#808080" stroke-width="1"/>
<text x="836.0" y="659.5" font-size="9" text-anchor="middle" fill="#333" font-family="Liberation Sans">0.2</text>
<path d="M855.7,639V643" stroke="#808080" stroke-width="1"/>
<path d="M876.4,639V643" stroke="#808080" stroke-width="1"/>
<path d="M897.1,639V643" stroke="#808080" stroke-width="1"/>
<path d="M917.8,639V643" stroke="#808080" stroke-width="1"/>
<path d="M938.5,639V647" stroke="#808080" stroke-width="1"/>
<text x="939.5" y="659.5" font-size="9" text-anchor="middle" fill="#333" font-family="Liberation Sans">0.3</text>
<path d="M959.2,639V643" stroke="#808080" stroke-width="1"/>
<path d="M979.9,639V643" stroke="#808080" stroke-width="1"/>
<path d="M1000.6,639V643" stroke="#808080" stroke-width="1"/>
<path d="M1021.3,639V643" stroke="#808080" stroke-width="1"/>
<path d="M1042.0,639V647" stroke="#808080" stroke-width="1"/>
<text x="1043.0" y="659.5" font-size="9" text-anchor="middle" fill="#333" font-family="Liberation Sans">0.4</text>
<path d="M1062.7,639V643" stroke="#808080" stroke-width="1"/>
<path d="M1083.4,639V643" stroke="#808080" stroke-width="1"/>
<path d="M1104.1,639V643" stroke="#808080" stroke-width="1"/>
<path d="M1124.8,639V643" stroke="#808080" stroke-width="1"/>
<path d="M1145.5,639V647" stroke="#808080" stroke-width="1"/>
<text x="1146.5" y="659.5" font-size="9" text-anchor="middle" fill="#333" font-family="Liberation Sans">0.5</text>
<path d="M1166.2,639V643" stroke="#808080" stroke-width="1"/>
<path d="M635.8,581V638" stroke="#e8302c" stroke-width="1.5"/>
<rect x="634.8" y="604" width="4" height="8" fill="#e8302c"/>
<path d="M1020.3,581V638" stroke="#e8302c" stroke-width="2"/>
<circle cx="1020.3" cy="608.5" r="4" fill="#e8302c"/>
<path d="M828.8,581V638" stroke="#e8302c" stroke-width="1" stroke-dasharray="3 2"/>
</svg>
<svg class="abs" style="left:0;top:0" width="1200" height="700"><circle cx="605.5" cy="564" r="7" fill="#fff" stroke="#333" stroke-width="1.2"/><path d="M605.5,557 a7,7 0 0 1 0,14z" fill="#111"/><text x="620" y="568.5" font-size="12" font-weight="bold" fill="#333" font-family="Liberation Sans">Contraste</text><text x="823.5" y="568" font-size="10.3" fill="#111" font-family="Liberation Sans">Pleine échelle</text><text x="915.5" y="568" font-size="10.3" fill="#111" font-family="Liberation Sans">Éliminer %</text><text x="995" y="568" font-size="10.3" fill="#111" font-family="Liberation Sans">Définir l'échelle</text><text x="1095" y="568" font-size="10.3" fill="#111" font-family="Liberation Sans">Min.</text><text x="1144" y="568" font-size="10.3" fill="#111" font-family="Liberation Sans">Max.</text><path d="M811,559 h11" stroke="#1a9a3a" stroke-width="2"/><path d="M811,559 l3,-3 v6z M822,559 l-3,-3 v6z" fill="#1a9a3a"/><rect x="811" y="563" width="2" height="7" fill="#e02020"/><rect x="814" y="565" width="2" height="5" fill="#2040e0"/><rect x="817" y="562" width="2" height="8" fill="#f07a20"/><rect x="820" y="566" width="2" height="4" fill="#e020a0"/><rect x="903" y="558" width="2" height="12" fill="#9a2aa0"/><rect x="906" y="560" width="2" height="10" fill="#2040e0"/><rect x="909" y="557" width="2" height="13" fill="#e02020"/><rect x="912" y="559" width="2" height="11" fill="#3a2ab0"/><path d="M983,559 v10 M988.5,559 v10 M994,559 v10" stroke="#e02020" stroke-width="1.2"/><circle cx="983" cy="564" r="1.6" fill="#e02020"/><circle cx="988.5" cy="564" r="1.6" fill="#e02020"/><circle cx="994" cy="564" r="1.6" fill="#e02020"/><rect x="1086" y="557" width="4" height="5" fill="#4a90d0"/><path d="M1087,561 v6 q0,2 2,2 h3 q2,0 2,-2 v-3 h-5" stroke="#555" stroke-width="0.9" fill="none"/><rect x="1134" y="557" width="4" height="5" fill="#4a90d0"/><path d="M1135,561 v6 q0,2 2,2 h3 q2,0 2,-2 v-3 h-5" stroke="#555" stroke-width="0.9" fill="none"/></svg>
<div class="abs" style="left:541px;top:680px;width:70px;height:20px;background:#f0f0f0;border:1px solid #d9d9d9;border-top:none"></div>
<div class="abs" style="left:610px;top:679px;width:79px;height:21px;background:#fff;border-left:1px solid #d9d9d9;border-right:1px solid #d9d9d9"></div>
<div class="abs" style="left:688px;top:680px;width:133px;height:20px;background:#f0f0f0;border:1px solid #d9d9d9;border-top:none"></div>
<div class="t" style="left:551px;top:684px;font-size:10.5px">Vue Signal</div>
<div class="t" style="left:623px;top:685px;font-size:10.5px">Vue Image</div>
<div class="t" style="left:698px;top:684px;font-size:10.5px">Gestionnaire de Macros</div>
</body></html>
